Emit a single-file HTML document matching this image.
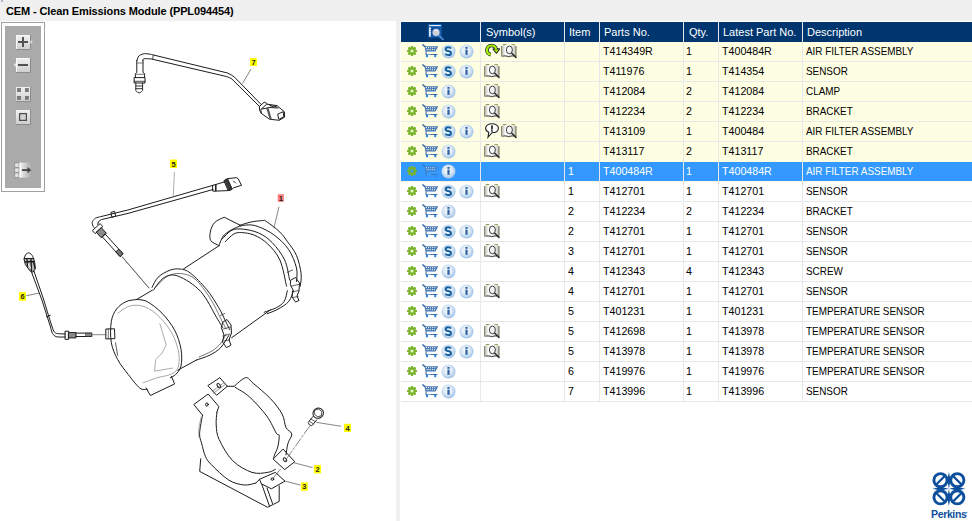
<!DOCTYPE html><html><head><meta charset="utf-8"><style>*{margin:0;padding:0;box-sizing:border-box}
html,body{width:972px;height:521px;overflow:hidden;background:#f0f0f0;font-family:"Liberation Sans",sans-serif;position:relative}
.title{position:absolute;left:6px;top:4px;font-size:11px;font-weight:bold;color:#000;letter-spacing:-0.12px;white-space:nowrap;line-height:14px}
.lp{position:absolute;left:0;top:21px;width:396px;height:500px;background:#fff;overflow:hidden}
.lp svg{position:absolute;left:0;top:-21px}
.tb{position:absolute;left:1px;top:22px;width:44px;height:170px;border:1px solid #a0a0a0;background:#fff}
.tbi{position:absolute;left:3px;top:3px;width:36px;height:162px;background:#aaaaaa}
.tbs{position:absolute;left:0;top:0}
.rp{position:absolute;left:400px;top:21px;width:572px;height:500px;background:#fff}
.hdr{position:absolute;left:401px;top:22px;width:571px;height:20px;background:#003670}
.hsep{position:absolute;top:22px;width:1px;height:20px;background:#e4e8f0}
.hicon{position:absolute;left:424px;top:22px}
.ht{position:absolute;top:22px;height:20px;line-height:20px;font-size:11px;color:#fff;white-space:nowrap}
.row{position:absolute;left:401px;width:571px;height:20px;border-bottom:1px solid #e8e8e8}
.rc{background:#fefee2}
.rw{background:#fff}
.rs{background:#3399ff;border-bottom-color:#3399ff}
.ricons{position:absolute;left:401px}
.rsym{position:absolute;left:481px}
.bt{position:absolute;height:19px;line-height:19px;font-size:11px;color:#000;white-space:nowrap}
.bt span{display:inline-block;transform:scaleX(0.9);transform-origin:0 50%}
.bt.sel{color:#fff}
.logo{position:absolute;left:929px;top:470px}
.bsep{position:absolute;top:42px;width:1px;height:360px;background:#e8e8e8;z-index:2}
.bt.n span{transform:scaleX(0.97)}
</style></head><body>
<svg width="0" height="0" style="position:absolute"><defs><radialGradient id="gc" cx="0.45" cy="0.42" r="0.58"><stop offset="0" stop-color="#f6f9fc"/><stop offset="0.5" stop-color="#e0ebf6"/><stop offset="0.85" stop-color="#b2cfec"/><stop offset="1" stop-color="#98bfe6"/></radialGradient><linearGradient id="btng" x1="0" y1="0" x2="0" y2="1"><stop offset="0" stop-color="#f4f4f4"/><stop offset="1" stop-color="#c8c8c8"/></linearGradient><linearGradient id="pg" x1="0" y1="0" x2="1" y2="0"><stop offset="0" stop-color="#c8c8c0"/><stop offset="0.25" stop-color="#ffffff"/><stop offset="0.8" stop-color="#f0f0f0"/><stop offset="1" stop-color="#c0c0b8"/></linearGradient></defs></svg>
<div style="position:absolute;left:1px;top:0;width:2px;height:2px;background:#b8b8c0"></div>
<div class="title">CEM - Clean Emissions Module (PPL094454)</div>
<div class="lp"><svg width="396" height="521" viewBox="0 0 396 521" style="position:absolute;left:0;top:-21px"><g fill="none" stroke="#1c1c1c" stroke-width="1" stroke-linejoin="round" stroke-linecap="round"><path d="M137.0 60.5 C137.2 59.9 137.6 58.0 138.2 57.0 C138.8 56.0 139.4 55.3 140.5 54.8 C141.6 54.2 143.2 53.8 144.6 53.7 C146.0 53.6 147.5 53.8 149.0 54.0 C150.5 54.2 152.8 54.8 153.5 55.0 L227.6 73 Q231.5 74.8 234.7 77.3 L260.8 104.2" />
<path d="M142.8 60.5 C142.8 60.3 142.6 59.7 143.0 59.4 C143.4 59.1 143.7 58.8 145.0 58.7 C146.3 58.6 150.0 58.9 151.0 58.9 L226.8 76.6 Q229.5 77.6 231.9 79 L259 106" />
<path d="M153.3 55 L152.7 59" stroke-width="0.8"/>
<path d="M136.8 60.5 L136.8 72.5 L135.4 73.6 L135.4 77.6 M143 60.5 L143 72.5 L144.6 73.6 L144.6 77.6" />
<path d="M136.8 63 L143 63 M135.4 74.3 L144.6 74.3" stroke="#555" stroke-width="0.8"/>
<path d="M134.5 77.6 L145.0 77.6 L145.0 83.0 L134.5 83.0 Z" />
<path d="M134.5 81.3 L145 81.3" stroke-width="0.8"/>
<path d="M135.8 83 L135.8 90.5 Q139.2 95.2 142.6 90.5 L142.6 83 M135.8 86 L142.6 86 M135.8 88.7 L142.6 88.7" stroke-width="0.9"/>
<path d="M259.3 106.5 L264.2 102.2 L266.5 103.1 L267.1 104.2" />
<path d="M259.3 106.5 L259.6 110.3 L261.3 113.4" />
<path d="M267.1 104.2 L277.5 105.7 L278.0 106.5 L284.4 111.7 L284.6 117.2 L279.2 120.3 L269.4 119.2 L268.2 118.3 L261.3 113.4 L260.8 110.0 Z" />
<path d="M278.0 114.0 L283.2 111.7 L283.8 116.6 L279.2 119.2 Z" />
<path d="M262.0 109.0 L270.0 107.5 L278.0 108.0" />
<path d="M267.5 108.5 L270.5 118.5" stroke="#555" stroke-width="2.2"/>
<path d="M270 105.5 L273 106.4 M274 106 L276.5 107" stroke-width="1.2"/>
<path d="M250.9 69.4 L242.7 83.1" stroke="#505050" stroke-width="0.7"/>
<path d="M212.9 185.3 L127.8 210 L100.5 216.7  C99.7 216.9 96.8 217.4 95.5 218.2 C94.2 219.0 93.0 220.4 92.5 221.5 C92.0 222.6 92.3 224.0 92.6 225.0 C92.8 226.0 93.8 227.1 94.0 227.5" />
<path d="M213 189.5 L128 213.4 L101.4 219.6 Q97.6 221 97.6 224.4" />
<path d="M111.3 212.3 L114.6 211.4 L115.6 216.2 L112.3 217.1 Z" />
<path d="M92.6 230.9 L95.1 233.6 L102.8 226.7 L100.4 223.9 Z" />
<path d="M96.4 232.4 L101.3 237.8 L106.4 233.3 L101.5 227.9 Z" fill="#8a8a8a"/>
<path d="M102.4 236.9 L120.1 256.6 L123.1 253.9 L105.3 234.2 Z" />
<path d="M116.1 252.1 L120.1 256.6 L123.1 253.9 L119.1 249.5 Z" fill="#777"/>
<path d="M122.5 257 L149 288" stroke="#555" stroke-width="0.7"/>
<path d="M212.9 185.3 L216.0 184.4 L216.0 191.1 L213.1 191.1 Z" />
<path d="M216.0 184.4 L224.2 182.0 L227.5 178.6 L236.7 177.7 L238.1 178.6 L241.5 185.3 L233.8 187.7 L230.9 190.1 L228.0 190.6 L216.0 191.1 Z" />
<path d="M224.2 180.5 L227.5 178.6 L231.9 188.5 L228.5 190.4 Z" fill="#3a3a3a"/>
<path d="M233.5 181 L235.5 183" stroke-width="1"/>
<path d="M174.4 172.4 L173.2 197.2" stroke="#888" stroke-width="0.7"/>
<path d="M24.3 258.6 C24.5 258.0 24.8 255.8 25.5 254.8 C26.2 253.9 27.4 253.0 28.4 252.9 C29.4 252.8 30.6 253.6 31.5 254.5 C32.4 255.4 33.2 257.8 33.6 258.4 Z" />
<path d="M24.3 258.6 L33.6 258.4 L34.7 262.4 L35.3 268.7 L33.0 272.2 L30.1 271.0 L25.5 264.7 Z" fill="#b8b8b8"/>
<path d="M25.5 262 L33.8 261.5 M27 259.5 L27.5 266 M31 259.5 L31.5 270.5 M33.8 263 L35 268" stroke-width="1.3"/>
<path d="M28.5 264 L30.5 268" stroke="#fff" stroke-width="1"/>
<path d="M31.5 272 L41.9 300 L47.7 318.2 L50.5 327  C50.8 328.1 51.6 331.9 52.5 333.5 C53.4 335.1 54.8 336.0 56.0 336.6 C57.2 337.2 58.4 336.9 60.0 337.0 C61.6 337.1 64.5 337.0 65.4 337.0" />
<path d="M34 271.2 L43.8 300 L49.6 319.2 L52.5 328  C52.8 328.7 53.6 331.3 54.5 332.2 C55.4 333.1 56.0 333.3 57.8 333.6 C59.6 333.9 64.1 333.9 65.4 334.0" />
<path d="M46.5 316.8 L50.2 315.3" />
<path d="M65.4 331.2 L68.8 331.2 L68.8 339.3 L65.4 339.3 Z" />
<path d="M68.8 332.6 L76.0 332.6 L76.0 337.9 L68.8 337.9 Z" fill="#8a8a8a"/>
<path d="M76.0 333.1 L91.8 333.1 L91.8 336.5 L76.0 336.5" />
<path d="M86.0 333.1 L91.8 333.1 L91.8 336.5 L86.0 336.5 Z" fill="#888" stroke-width="0.6"/>
<path d="M93.3 334.7 L106 334.7" stroke="#555" stroke-width="0.7"/>
<path d="M106.2 329.0 L114.5 328.8 L114.9 338.6 L106.2 338.9 Z" />
<path d="M108.3 329 L108.3 338.8" stroke-width="0.6"/>
<path d="M26.5 295.7 L38.6 293.2" stroke="#505050" stroke-width="0.7"/>
<path d="M136.6 299.5 C134.8 299.9 129.4 300.0 126.1 301.6 C122.8 303.2 119.1 305.7 116.6 309.0 C114.1 312.3 112.2 316.0 111.3 321.6 C110.4 327.2 110.2 336.4 111.3 342.7 C112.4 349.0 114.9 354.3 117.7 359.6 C120.5 364.9 124.5 369.6 128.2 374.4 C131.9 379.1 136.6 385.6 139.8 388.1 C143.0 390.6 146.0 389.0 147.2 389.2" stroke-width="1"/>
<path d="M136.6 299.5 C138.4 299.9 143.0 299.3 147.2 301.6 C151.4 303.9 157.4 308.4 162.0 313.2 C166.6 317.9 171.4 324.1 174.6 330.1 C177.8 336.1 179.9 343.1 181.0 349.1 C182.1 355.1 181.9 361.8 181.0 366.0 C180.1 370.2 177.5 372.5 175.7 374.4 C173.9 376.3 171.3 377.1 170.4 377.6" stroke-width="1"/>
<path d="M117.7 313.2 C119.8 312.0 125.7 306.9 130.3 305.8 C134.9 304.8 140.2 305.0 145.1 306.9 C150.0 308.8 155.3 312.8 159.9 317.4 C164.5 322.0 169.3 328.3 172.5 334.3 C175.7 340.3 177.9 347.7 178.8 353.3 C179.7 358.9 179.2 364.6 177.8 368.1 C176.4 371.6 173.8 372.8 170.4 374.4 C167.1 376.0 162.3 376.2 157.7 377.6 C153.1 379.0 145.4 381.9 143.0 382.8" stroke="#808080" stroke-width="0.7"/>
<path d="M115.5 342.7 L117.7 355.4" stroke-width="0.7"/>
<path d="M159.9 323.8 L166.2 344.9 L162.0 353.3 L155.6 359.6 L154.6 371.2 L172.5 368.1" stroke="#888" stroke-width="0.7"/>
<path d="M146.1 388.1 L150.4 395.5 L174.6 383.9 L171.5 376.5" />
<path d="M136.6 299.5 L152.1 290.3" />
<path d="M183.3 269.1 L219.4 245.5" />
<path d="M177.8 370.2 L196.5 360" />
<path d="M231.7 337.7 L270.4 309.9" />
<path d="M152.1 287.3 C153.1 285.6 155.1 280.1 158.1 277.2 C161.1 274.3 166.5 271.5 170.2 270.1 C173.9 268.8 176.9 268.6 180.3 269.1 C183.7 269.6 186.0 269.7 190.4 273.1 C194.8 276.5 201.8 283.6 206.5 289.3 C211.2 295.0 215.2 301.7 218.6 307.4 C222.0 313.1 224.8 319.8 226.7 323.5 C228.5 327.2 229.2 328.6 229.7 329.6" />
<path d="M153.1 290.5 C154.9 288.3 160.0 279.9 164.2 277.5 C168.4 275.1 172.2 273.9 178.3 276.2 C184.4 278.5 194.1 284.4 200.5 291.3 C206.9 298.2 212.9 311.4 216.6 317.5 C220.3 323.6 221.7 325.9 222.7 327.6" />
<path d="M155.5 287.2 C157.4 285.4 162.9 278.8 167.0 276.5 C171.1 274.2 175.3 273.1 180.0 273.5 C184.7 273.9 190.0 274.9 195.0 279.0 C200.0 283.1 205.6 291.2 210.0 298.0 C214.4 304.8 218.8 314.8 221.5 320.0 C224.2 325.2 225.2 327.5 226.0 329.0" stroke-width="0.6"/>
<path d="M220.6 315.5 L224.7 313.5" stroke-width="0.7"/>
<path d="M223.0 322.0 L227.0 319.5 L231.0 325.0 L231.5 333.0 L229.0 340.0 L231.0 345.0 L226.5 347.7 L222.5 342.0 L224.0 335.0 L221.5 328.0 Z" />
<path d="M223.5 329 L230.5 327 M223 336 L230 334 M224 341 L229.5 340" stroke-width="0.7"/>
<path d="M196.5 360.0 C198.8 359.2 206.0 357.1 210.0 355.0 C214.0 352.9 217.5 350.9 220.6 347.7 C223.7 344.5 227.3 337.6 228.7 335.6" />
<path d="M199.0 357.0 C201.2 356.0 208.3 353.3 212.0 351.0 C215.7 348.7 218.7 345.8 221.0 343.0 C223.3 340.2 225.2 335.5 226.0 334.0" stroke-width="0.6"/>
<path d="M218.9 245.5 C217.6 244.7 212.2 242.9 210.8 240.7 C209.4 238.5 209.7 235.1 210.3 232.1 C210.9 229.1 212.3 225.0 214.6 222.5 C216.9 220.0 222.6 218.1 224.2 217.2 L240.5 225.4" />
<path d="M239.5 225.4 C241.4 224.8 247.2 222.8 251.1 222.0 C254.9 221.2 260.1 220.7 262.6 220.6 C265.2 220.5 263.5 219.6 266.4 221.5 C269.3 223.4 276.4 228.7 279.9 232.1 C283.4 235.5 284.7 237.8 287.5 241.7 C290.3 245.6 294.2 250.1 296.5 255.4 C298.8 260.8 300.5 268.7 301.1 273.8 C301.7 278.9 300.4 284.1 300.3 286.1" />
<path d="M219.4 244.5 C220.2 242.9 221.3 237.9 224.2 235.0 C227.1 232.1 232.7 229.0 236.7 227.3 C240.7 225.6 244.5 225.0 248.2 224.9 C251.9 224.8 254.4 225.1 258.7 226.8 C263.0 228.5 269.1 231.2 274.1 235.0 C279.1 238.8 284.8 243.8 288.5 249.3 C292.2 254.8 295.2 262.6 296.5 268.0 C297.8 273.4 296.5 279.2 296.5 281.5" />
<path d="M222.3 238.8 C223.9 237.4 228.4 231.8 231.9 230.2 C235.4 228.6 238.9 228.7 243.4 229.2 C247.9 229.7 253.9 230.8 258.7 233.0 C263.5 235.2 267.9 238.1 272.2 242.6 C276.5 247.1 281.8 253.8 284.7 260.0 C287.6 266.2 288.8 276.7 289.6 280.0" />
<path d="M225.2 241.7 C226.6 240.4 231.1 235.5 233.8 234.0 C236.5 232.5 238.2 232.4 241.5 232.6 C244.8 232.8 249.6 233.2 253.9 235.0 C258.2 236.8 263.1 239.4 267.4 243.6 C271.7 247.8 276.7 252.9 279.9 260.0 C283.1 267.1 285.4 281.8 286.5 286.1" />
<path d="M287.3 272.3 L292.6 270" stroke-width="0.7"/>
<path d="M291.0 280.0 L295.5 277.5 L299.5 283.0 L299.0 291.0 L297.0 296.0 L299.0 300.5 L295.5 302.0 L292.0 297.0 L293.0 290.0 L290.5 285.0 Z" />
<path d="M291.5 286 L298.5 284.5 M292 292 L298.5 290.5 M293 297.5 L298 296.5" stroke-width="0.7"/>
<path d="M287.3 290.7 C286.8 292.5 286.0 298.6 284.2 301.4 C282.4 304.2 279.8 305.8 276.5 307.6 C273.2 309.4 266.2 311.4 264.2 312.2" />
<path d="M293.4 290.7 C292.6 292.5 291.4 298.3 288.8 301.4 C286.2 304.5 281.6 307.1 278.0 309.1 C274.4 311.2 269.1 312.9 267.3 313.7" />
<path d="M278.9 207 L274.1 227.3" stroke="#555" stroke-width="0.7"/>
<path d="M122 256.8 L149 288" stroke="#555" stroke-width="0.7"/>
<path d="M208.2 385.4 L219.8 377.7 L227.4 386.3 L216.9 395.0 Z" />
<ellipse cx="218.8" cy="385.6" rx="1.4" ry="2.4" transform="rotate(-35 218.8 385.6)"/>
<path d="M213.5 393.2 L225 384.6 M212 391.5 L223.6 383" stroke="#555" stroke-width="0.6"/>
<path d="M227 386.3 L234.1 386.3  C236.0 384.9 242.5 378.2 245.7 377.7 C248.9 377.2 249.2 379.9 253.3 383.4 C257.5 386.9 265.8 393.7 270.6 398.8 C275.4 403.9 279.5 409.3 282.1 414.1 C284.7 418.9 284.4 424.3 286.0 427.6 C287.6 430.9 291.5 431.4 291.8 434.0 C292.1 436.6 289.0 439.8 288.0 443.3 C287.0 446.8 286.3 453.0 286.0 454.9" />
<path d="M235.1 387.3 C237.5 388.9 244.2 392.1 249.5 396.9 C254.8 401.7 262.3 410.0 266.8 416.1 C271.3 422.2 274.3 430.1 276.4 433.3 C278.5 436.5 279.0 433.2 279.2 435.5 C279.4 437.8 278.6 443.6 277.8 446.8 C277.0 450.1 275.2 453.0 274.5 455.0 C273.8 457.0 273.6 458.2 273.4 458.8" />
<path d="M273.4 458.8 L283.1 449.1 L294.7 461.7 L285.0 469.4 Z" />
<ellipse cx="285" cy="459.8" rx="1.4" ry="2.2" transform="rotate(-40 285 459.8)"/>
<path d="M216.9 412.2 L218.8 406.5 L208.2 394.0 L193.8 404.5 L202.5 415.1" />
<path d="M202.5 415.1 C202.0 418.1 199.8 428.6 199.6 433.3 C199.4 438.0 200.6 439.5 201.6 443.3 C202.6 447.1 203.8 452.8 205.4 456.4 C207.0 459.9 207.4 460.7 211.3 464.6 C215.2 468.6 223.3 476.7 228.8 480.1 C234.3 483.5 239.8 484.5 244.3 485.0 C248.8 485.5 254.0 483.3 255.9 483.0" />
<path d="M255.9 483 L259.8 479.1" />
<path d="M201.2 417.0 C200.8 418.8 199.4 424.7 199.0 428.0 C198.6 431.3 198.8 435.5 198.8 437.0" stroke="#666" stroke-width="0.6"/>
<ellipse cx="206.9" cy="404.5" rx="1.3" ry="1.6"/>
<path d="M216.9 412.2 C216.8 414.3 215.8 420.5 216.2 425.0 C216.6 429.5 216.3 433.4 219.1 439.4 C221.8 445.3 227.2 455.2 232.7 460.7 C238.2 466.2 246.2 470.4 252.0 472.4 C257.8 474.3 263.7 472.9 267.6 472.4 C271.5 471.9 274.0 469.9 275.3 469.4" />
<path d="M200.7 458.8 L199.7 471.4 L267.6 507.3 L279.2 501.4 L279.2 485.9" />
<path d="M259.8 479.1 L275.3 472.4 L285.0 481.1 L271.4 488.8 L261.7 484.0 Z" />
<ellipse cx="272.4" cy="479.1" rx="1.4" ry="1.2"/>
<path d="M261.7 484 L269.5 506.3 M267 488 L272.5 503.5" />
<ellipse cx="318.2" cy="413.2" rx="5.4" ry="5" transform="rotate(-30 318.2 413.2)"/>
<path d="M314.8 410.2 L318.6 409.0 L321.8 411.4 L321.6 415.6 L317.8 416.8 L314.6 414.4 Z" stroke-width="0.8"/>
<path d="M313 416.5 L308.2 422.3 Q308.5 425.6 311.8 425.8 L316.8 419.8" stroke-width="0.9"/>
<path d="M310.8 419 L315.4 421.6 M309.4 421.4 L313.8 424" stroke-width="0.7"/>
<path d="M309.4 426.5 L285 461" stroke="#555" stroke-width="0.7" stroke-dasharray="9 2 2 2"/>
<path d="M280.2 469.4 L272.4 479.1" stroke="#555" stroke-width="0.7"/>
<path d="M316.6 422.4 L340.6 426.2" stroke="#505050" stroke-width="0.7"/>
<path d="M293.7 462.7 L312.2 467.5" stroke="#505050" stroke-width="0.7"/>
<path d="M285 481.1 L300.1 485" stroke="#505050" stroke-width="0.7"/></g><g font-family="Liberation Sans" font-size="7.5" font-weight="bold" text-anchor="middle" fill="#222"><rect x="250" y="58" width="7" height="8" fill="#ffff00"/><text x="253.5" y="64.6">7</text><rect x="170" y="159.5" width="7" height="8.5" fill="#ffff00"/><text x="173.5" y="166.6">5</text><rect x="277.7" y="194.2" width="6.2" height="7.7" fill="#ff8080"/><text x="280.8" y="200.5">1</text><rect x="19" y="292.2" width="7" height="8.6" fill="#ffff00"/><text x="22.5" y="299.4">6</text><rect x="344" y="423.8" width="7" height="8.2" fill="#ffff00"/><text x="347.5" y="430.6">4</text><rect x="314" y="465" width="7" height="8.4" fill="#ffff00"/><text x="317.5" y="472.0">2</text><rect x="300.9" y="482.4" width="6.9" height="8.4" fill="#ffff00"/><text x="304.3" y="489.4">3</text></g></svg></div>
<div class="tb"><div class="tbi"></div></div>
<svg width="50" height="200" viewBox="0 0 50 200" style="position:absolute;left:0;top:0">
<defs>
<linearGradient id="tbg" x1="0" y1="0" x2="0" y2="1"><stop offset="0" stop-color="#f2f2f2"/><stop offset="1" stop-color="#cfcfcf"/></linearGradient>
</defs>
<!-- plus -->
<rect x="16" y="35" width="14" height="14" fill="url(#tbg)"/>
<path d="M16.5 49 V35.5 H29.5" fill="none" stroke="#fafafa" stroke-width="1"/>
<path d="M16 49.5 H30.5 V35" fill="none" stroke="#8c8c8c" stroke-width="1"/>
<path d="M30.5 40 L32.8 42 L30.5 44 Z" fill="#e4e4e4"/>
<rect x="18" y="41" width="10" height="2" fill="#525252"/><rect x="22" y="37" width="2" height="10" fill="#525252"/>
<!-- minus -->
<rect x="16" y="58" width="14" height="14" fill="url(#tbg)"/>
<path d="M16.5 72 V58.5 H29.5" fill="none" stroke="#fafafa" stroke-width="1"/>
<path d="M16 72.5 H30.5 V58" fill="none" stroke="#8c8c8c" stroke-width="1"/>
<path d="M16 63 L13.5 65 L16 67 Z" fill="#e4e4e4"/>
<rect x="18" y="64" width="10" height="2" fill="#525252"/>
<!-- grid -->
<rect x="16" y="87" width="14" height="14" fill="url(#tbg)"/>
<path d="M16 101.5 H30.5 V87" fill="none" stroke="#8c8c8c" stroke-width="1"/>
<g fill="#7a7a7a" stroke="#666" stroke-width="0.6"><rect x="17.5" y="88.5" width="3.2" height="3.2"/><rect x="25.3" y="88.5" width="3.2" height="3.2"/><rect x="17.5" y="96.3" width="3.2" height="3.2"/><rect x="25.3" y="96.3" width="3.2" height="3.2"/></g>
<!-- square -->
<rect x="16" y="110" width="14" height="14" fill="url(#tbg)"/>
<path d="M16 124.5 H30.5 V110" fill="none" stroke="#8c8c8c" stroke-width="1"/>
<rect x="19.6" y="113.6" width="6.8" height="6.8" fill="#d4d4d4" stroke="#505050" stroke-width="1.3"/>
<!-- fit -->
<g fill="#e6e6e6" stroke="#8a8a8a" stroke-width="0.7"><rect x="14.8" y="163" width="4.2" height="4.3"/><rect x="14.8" y="168" width="4.2" height="4.3"/><rect x="14.8" y="173" width="4.2" height="4.3"/></g>
<defs><linearGradient id="fitg" x1="0" y1="0" x2="1" y2="0"><stop offset="0" stop-color="#f4f4f4"/><stop offset="1" stop-color="#aaaaaa"/></linearGradient></defs>
<rect x="19.6" y="162.6" width="11.6" height="15" fill="url(#fitg)"/>
<rect x="19.6" y="162.6" width="1.2" height="15" fill="#fff"/>
<rect x="22" y="169.2" width="6" height="1.8" fill="#454545"/>
<path d="M27.5 167 L31.2 170.1 L27.5 173.2 Z" fill="#454545"/>
</svg>

<div class="rp"></div>
<div class="hdr"></div>
<div class="hsep" style="left:480px"></div>
<div class="hsep" style="left:564px"></div>
<div class="hsep" style="left:599px"></div>
<div class="hsep" style="left:683px"></div>
<div class="hsep" style="left:718px"></div>
<div class="hsep" style="left:802px"></div>
<div class="bsep" style="left:480px"></div>
<div class="bsep" style="left:564px"></div>
<div class="bsep" style="left:599px"></div>
<div class="bsep" style="left:683px"></div>
<div class="bsep" style="left:718px"></div>
<div class="bsep" style="left:802px"></div>
<svg class="hicon" width="20" height="20" viewBox="0 0 20 20"><g transform="translate(0 0)"><rect x="4.3" y="2.2" width="13.2" height="13.2" fill="#1a6ec4"/>
 <rect x="5.1" y="4.6" width="11.6" height="10" fill="#0e4f98"/>
 <rect x="5" y="3" width="11.8" height="1.1" fill="#e4eefa"/>
 <rect x="5.1" y="5.4" width="1.9" height="9.2" fill="#eef4fb"/>
 <g fill="#2a6ab8"><rect x="6.3" y="7" width="0.8" height="0.8"/><rect x="6.3" y="9" width="0.8" height="0.8"/><rect x="6.3" y="11" width="0.8" height="0.8"/><rect x="6.3" y="13" width="0.8" height="0.8"/></g>
 <path d="M14.6 13.4 L19 17.4" stroke="#4f8ad0" stroke-width="1.9" stroke-linecap="round"/>
 <circle cx="12.1" cy="10.4" r="4.5" fill="#2c66b2"/>
 <circle cx="12.1" cy="10.4" r="3.5" fill="#cdd3db"/>
 <path d="M10 8.6 Q12 7.2 14.2 8.4" stroke="#f4f6f8" stroke-width="0.9" fill="none"/></g></svg>
<div class="ht" style="left:486px">Symbol(s)</div>
<div class="ht" style="left:569px">Item</div>
<div class="ht" style="left:604px">Parts No.</div>
<div class="ht" style="left:689px">Qty.</div>
<div class="ht" style="left:723px">Latest Part No.</div>
<div class="ht" style="left:807px">Description</div>
<div class="row rc" style="top:42px"></div>
<svg class="ricons" style="top:42px" width="79" height="19" viewBox="0 0 79 19"><g transform="translate(6 4)"><g fill="#79b32b">
 <circle cx="5" cy="5" r="3.7"/>
 <rect x="3.9" y="0" width="2.2" height="10" rx="0.6"/>
 <rect x="0" y="3.9" width="10" height="2.2" rx="0.6"/>
 <rect x="3.9" y="0" width="2.2" height="10" rx="0.6" transform="rotate(45 5 5)"/>
 <rect x="3.9" y="0" width="2.2" height="10" rx="0.6" transform="rotate(-45 5 5)"/>
 </g>
 <circle cx="5" cy="5" r="1.6" fill="#e4f6c8"/></g><g transform="translate(21 2)"><path d="M0.9 0.9 L3 2.6" stroke="#3d6ba5" stroke-width="1.5" stroke-linecap="round"/>
 <path d="M2.6 2.2 H16.2 L13.6 7.4 H3.4 Z" fill="#4776b0"/>
 <g fill="#e6eef8"><rect x="3.7" y="3.1" width="1.3" height="1.1"/><rect x="5.9" y="3.1" width="1.1" height="1.1"/><rect x="8" y="3.1" width="1.1" height="1.1"/><rect x="10" y="3.1" width="1.1" height="1.1"/><rect x="12.2" y="3.1" width="1.1" height="1.1"/>
 <rect x="4.5" y="5.1" width="1.1" height="1.1"/><rect x="6.2" y="5.1" width="1.1" height="1.1"/><rect x="8.1" y="5.1" width="1.1" height="1.1"/><rect x="10" y="5.1" width="1.1" height="1.1"/><rect x="12" y="5.1" width="1.1" height="1.1"/></g>
 <path d="M4.1 7.2 V10.5 H15.4" fill="none" stroke="#3d6ba5" stroke-width="1.1"/>
 <path d="M5 10.5 H9" stroke="#7ab8f0" stroke-width="0.8"/>
 <rect x="4" y="11" width="2" height="2.2" fill="#2e88e0"/><rect x="12.2" y="11" width="2" height="2.2" fill="#2e88e0"/></g><g transform="translate(40 2)"><circle cx="7.5" cy="7.5" r="7" fill="url(#gc)"/>
 <path d="M10 4.6 Q9.2 3.3 7.2 3.3 Q4.6 3.3 4.6 5.3 Q4.6 6.7 7.2 7.1 Q10 7.5 10 9.2 Q10 11.1 7.2 11.1 Q5.2 11.1 4.3 9.8" fill="none" stroke="#135fa0" stroke-width="2"/></g><g transform="translate(58 2)"><circle cx="7.5" cy="7.5" r="7" fill="url(#gc)"/>
 <rect x="6.4" y="3" width="2.2" height="1.8" fill="#2f60a0"/>
 <rect x="6.4" y="5.6" width="2.2" height="5.2" fill="#2f60a0"/></g></svg>
<svg class="rsym" style="top:42px" width="83" height="19" viewBox="0 0 83 19"><g transform="translate(4 1)"><path d="M5.7 11.6 A4.6 4.6 0 1 1 11.1 6.3" fill="none" stroke="#2a2a2a" stroke-width="3.7"/>
 <path d="M8.3 6.1 L14.4 6.1 L11.4 10 Z" fill="#2a2a2a" stroke="#2a2a2a" stroke-width="1.5" stroke-linejoin="round"/>
 <path d="M5.7 11.6 A4.6 4.6 0 1 1 11.1 6.3" fill="none" stroke="#a2ee00" stroke-width="2.2"/>
 <path d="M8.9 6.5 L13.8 6.5 L11.4 9.4 Z" fill="#a2ee00"/></g><g transform="translate(20 0)"><linearGradient id="pg" x1="0" y1="0" x2="1" y2="0"><stop offset="0" stop-color="#c8c8c0"/><stop offset="0.25" stop-color="#ffffff"/><stop offset="0.8" stop-color="#f0f0f0"/><stop offset="1" stop-color="#c0c0b8"/></linearGradient>
 <rect x="0.2" y="4" width="1.3" height="10.6" fill="#6e6e58"/>
 <rect x="14.2" y="4" width="1.3" height="10.6" fill="#6e6e58"/>
 <rect x="1.8" y="2" width="3.6" height="1.4" fill="#9c9a62"/><rect x="10.4" y="2" width="3.6" height="1.4" fill="#a8a660"/>
 <path d="M1.4 3.8 L5.2 3.2 L7.8 4 L10.4 3.2 L14.2 3.8 L14.2 14 L7.8 14.4 L1.4 14 Z" fill="url(#pg)"/>
 <path d="M1.4 14.2 Q4.5 13.4 7.8 14.7 Q11 13.4 14.2 14.2" fill="none" stroke="#5a5a5a" stroke-width="1.1"/>
 <ellipse cx="8.4" cy="7.9" rx="3" ry="3.9" fill="none" stroke="#3a3a3a" stroke-width="1"/>
 <path d="M10.8 11.2 L15 15.4" stroke="#2a2a2a" stroke-width="1.5" stroke-linecap="round"/></g></svg>
<div class="bt n" style="left:603px;top:42px"><span>T414349R</span></div>
<div class="bt n" style="left:686px;top:42px"><span>1</span></div>
<div class="bt n" style="left:722px;top:42px"><span>T400484R</span></div>
<div class="bt" style="left:806px;top:42px"><span>AIR FILTER ASSEMBLY</span></div>
<div class="row rc" style="top:62px"></div>
<svg class="ricons" style="top:62px" width="79" height="19" viewBox="0 0 79 19"><g transform="translate(6 4)"><g fill="#79b32b">
 <circle cx="5" cy="5" r="3.7"/>
 <rect x="3.9" y="0" width="2.2" height="10" rx="0.6"/>
 <rect x="0" y="3.9" width="10" height="2.2" rx="0.6"/>
 <rect x="3.9" y="0" width="2.2" height="10" rx="0.6" transform="rotate(45 5 5)"/>
 <rect x="3.9" y="0" width="2.2" height="10" rx="0.6" transform="rotate(-45 5 5)"/>
 </g>
 <circle cx="5" cy="5" r="1.6" fill="#e4f6c8"/></g><g transform="translate(21 2)"><path d="M0.9 0.9 L3 2.6" stroke="#3d6ba5" stroke-width="1.5" stroke-linecap="round"/>
 <path d="M2.6 2.2 H16.2 L13.6 7.4 H3.4 Z" fill="#4776b0"/>
 <g fill="#e6eef8"><rect x="3.7" y="3.1" width="1.3" height="1.1"/><rect x="5.9" y="3.1" width="1.1" height="1.1"/><rect x="8" y="3.1" width="1.1" height="1.1"/><rect x="10" y="3.1" width="1.1" height="1.1"/><rect x="12.2" y="3.1" width="1.1" height="1.1"/>
 <rect x="4.5" y="5.1" width="1.1" height="1.1"/><rect x="6.2" y="5.1" width="1.1" height="1.1"/><rect x="8.1" y="5.1" width="1.1" height="1.1"/><rect x="10" y="5.1" width="1.1" height="1.1"/><rect x="12" y="5.1" width="1.1" height="1.1"/></g>
 <path d="M4.1 7.2 V10.5 H15.4" fill="none" stroke="#3d6ba5" stroke-width="1.1"/>
 <path d="M5 10.5 H9" stroke="#7ab8f0" stroke-width="0.8"/>
 <rect x="4" y="11" width="2" height="2.2" fill="#2e88e0"/><rect x="12.2" y="11" width="2" height="2.2" fill="#2e88e0"/></g><g transform="translate(40 2)"><circle cx="7.5" cy="7.5" r="7" fill="url(#gc)"/>
 <path d="M10 4.6 Q9.2 3.3 7.2 3.3 Q4.6 3.3 4.6 5.3 Q4.6 6.7 7.2 7.1 Q10 7.5 10 9.2 Q10 11.1 7.2 11.1 Q5.2 11.1 4.3 9.8" fill="none" stroke="#135fa0" stroke-width="2"/></g><g transform="translate(58 2)"><circle cx="7.5" cy="7.5" r="7" fill="url(#gc)"/>
 <rect x="6.4" y="3" width="2.2" height="1.8" fill="#2f60a0"/>
 <rect x="6.4" y="5.6" width="2.2" height="5.2" fill="#2f60a0"/></g></svg>
<svg class="rsym" style="top:62px" width="83" height="19" viewBox="0 0 83 19"><g transform="translate(3 0)"><linearGradient id="pg" x1="0" y1="0" x2="1" y2="0"><stop offset="0" stop-color="#c8c8c0"/><stop offset="0.25" stop-color="#ffffff"/><stop offset="0.8" stop-color="#f0f0f0"/><stop offset="1" stop-color="#c0c0b8"/></linearGradient>
 <rect x="0.2" y="4" width="1.3" height="10.6" fill="#6e6e58"/>
 <rect x="14.2" y="4" width="1.3" height="10.6" fill="#6e6e58"/>
 <rect x="1.8" y="2" width="3.6" height="1.4" fill="#9c9a62"/><rect x="10.4" y="2" width="3.6" height="1.4" fill="#a8a660"/>
 <path d="M1.4 3.8 L5.2 3.2 L7.8 4 L10.4 3.2 L14.2 3.8 L14.2 14 L7.8 14.4 L1.4 14 Z" fill="url(#pg)"/>
 <path d="M1.4 14.2 Q4.5 13.4 7.8 14.7 Q11 13.4 14.2 14.2" fill="none" stroke="#5a5a5a" stroke-width="1.1"/>
 <ellipse cx="8.4" cy="7.9" rx="3" ry="3.9" fill="none" stroke="#3a3a3a" stroke-width="1"/>
 <path d="M10.8 11.2 L15 15.4" stroke="#2a2a2a" stroke-width="1.5" stroke-linecap="round"/></g></svg>
<div class="bt n" style="left:603px;top:62px"><span>T411976</span></div>
<div class="bt n" style="left:686px;top:62px"><span>1</span></div>
<div class="bt n" style="left:722px;top:62px"><span>T414354</span></div>
<div class="bt" style="left:806px;top:62px"><span>SENSOR</span></div>
<div class="row rc" style="top:82px"></div>
<svg class="ricons" style="top:82px" width="79" height="19" viewBox="0 0 79 19"><g transform="translate(6 4)"><g fill="#79b32b">
 <circle cx="5" cy="5" r="3.7"/>
 <rect x="3.9" y="0" width="2.2" height="10" rx="0.6"/>
 <rect x="0" y="3.9" width="10" height="2.2" rx="0.6"/>
 <rect x="3.9" y="0" width="2.2" height="10" rx="0.6" transform="rotate(45 5 5)"/>
 <rect x="3.9" y="0" width="2.2" height="10" rx="0.6" transform="rotate(-45 5 5)"/>
 </g>
 <circle cx="5" cy="5" r="1.6" fill="#e4f6c8"/></g><g transform="translate(21 2)"><path d="M0.9 0.9 L3 2.6" stroke="#3d6ba5" stroke-width="1.5" stroke-linecap="round"/>
 <path d="M2.6 2.2 H16.2 L13.6 7.4 H3.4 Z" fill="#4776b0"/>
 <g fill="#e6eef8"><rect x="3.7" y="3.1" width="1.3" height="1.1"/><rect x="5.9" y="3.1" width="1.1" height="1.1"/><rect x="8" y="3.1" width="1.1" height="1.1"/><rect x="10" y="3.1" width="1.1" height="1.1"/><rect x="12.2" y="3.1" width="1.1" height="1.1"/>
 <rect x="4.5" y="5.1" width="1.1" height="1.1"/><rect x="6.2" y="5.1" width="1.1" height="1.1"/><rect x="8.1" y="5.1" width="1.1" height="1.1"/><rect x="10" y="5.1" width="1.1" height="1.1"/><rect x="12" y="5.1" width="1.1" height="1.1"/></g>
 <path d="M4.1 7.2 V10.5 H15.4" fill="none" stroke="#3d6ba5" stroke-width="1.1"/>
 <path d="M5 10.5 H9" stroke="#7ab8f0" stroke-width="0.8"/>
 <rect x="4" y="11" width="2" height="2.2" fill="#2e88e0"/><rect x="12.2" y="11" width="2" height="2.2" fill="#2e88e0"/></g><g transform="translate(40 2)"><circle cx="7.5" cy="7.5" r="7" fill="url(#gc)"/>
 <rect x="6.4" y="3" width="2.2" height="1.8" fill="#2f60a0"/>
 <rect x="6.4" y="5.6" width="2.2" height="5.2" fill="#2f60a0"/></g></svg>
<svg class="rsym" style="top:82px" width="83" height="19" viewBox="0 0 83 19"><g transform="translate(3 0)"><linearGradient id="pg" x1="0" y1="0" x2="1" y2="0"><stop offset="0" stop-color="#c8c8c0"/><stop offset="0.25" stop-color="#ffffff"/><stop offset="0.8" stop-color="#f0f0f0"/><stop offset="1" stop-color="#c0c0b8"/></linearGradient>
 <rect x="0.2" y="4" width="1.3" height="10.6" fill="#6e6e58"/>
 <rect x="14.2" y="4" width="1.3" height="10.6" fill="#6e6e58"/>
 <rect x="1.8" y="2" width="3.6" height="1.4" fill="#9c9a62"/><rect x="10.4" y="2" width="3.6" height="1.4" fill="#a8a660"/>
 <path d="M1.4 3.8 L5.2 3.2 L7.8 4 L10.4 3.2 L14.2 3.8 L14.2 14 L7.8 14.4 L1.4 14 Z" fill="url(#pg)"/>
 <path d="M1.4 14.2 Q4.5 13.4 7.8 14.7 Q11 13.4 14.2 14.2" fill="none" stroke="#5a5a5a" stroke-width="1.1"/>
 <ellipse cx="8.4" cy="7.9" rx="3" ry="3.9" fill="none" stroke="#3a3a3a" stroke-width="1"/>
 <path d="M10.8 11.2 L15 15.4" stroke="#2a2a2a" stroke-width="1.5" stroke-linecap="round"/></g></svg>
<div class="bt n" style="left:603px;top:82px"><span>T412084</span></div>
<div class="bt n" style="left:686px;top:82px"><span>2</span></div>
<div class="bt n" style="left:722px;top:82px"><span>T412084</span></div>
<div class="bt" style="left:806px;top:82px"><span>CLAMP</span></div>
<div class="row rc" style="top:102px"></div>
<svg class="ricons" style="top:102px" width="79" height="19" viewBox="0 0 79 19"><g transform="translate(6 4)"><g fill="#79b32b">
 <circle cx="5" cy="5" r="3.7"/>
 <rect x="3.9" y="0" width="2.2" height="10" rx="0.6"/>
 <rect x="0" y="3.9" width="10" height="2.2" rx="0.6"/>
 <rect x="3.9" y="0" width="2.2" height="10" rx="0.6" transform="rotate(45 5 5)"/>
 <rect x="3.9" y="0" width="2.2" height="10" rx="0.6" transform="rotate(-45 5 5)"/>
 </g>
 <circle cx="5" cy="5" r="1.6" fill="#e4f6c8"/></g><g transform="translate(21 2)"><path d="M0.9 0.9 L3 2.6" stroke="#3d6ba5" stroke-width="1.5" stroke-linecap="round"/>
 <path d="M2.6 2.2 H16.2 L13.6 7.4 H3.4 Z" fill="#4776b0"/>
 <g fill="#e6eef8"><rect x="3.7" y="3.1" width="1.3" height="1.1"/><rect x="5.9" y="3.1" width="1.1" height="1.1"/><rect x="8" y="3.1" width="1.1" height="1.1"/><rect x="10" y="3.1" width="1.1" height="1.1"/><rect x="12.2" y="3.1" width="1.1" height="1.1"/>
 <rect x="4.5" y="5.1" width="1.1" height="1.1"/><rect x="6.2" y="5.1" width="1.1" height="1.1"/><rect x="8.1" y="5.1" width="1.1" height="1.1"/><rect x="10" y="5.1" width="1.1" height="1.1"/><rect x="12" y="5.1" width="1.1" height="1.1"/></g>
 <path d="M4.1 7.2 V10.5 H15.4" fill="none" stroke="#3d6ba5" stroke-width="1.1"/>
 <path d="M5 10.5 H9" stroke="#7ab8f0" stroke-width="0.8"/>
 <rect x="4" y="11" width="2" height="2.2" fill="#2e88e0"/><rect x="12.2" y="11" width="2" height="2.2" fill="#2e88e0"/></g><g transform="translate(40 2)"><circle cx="7.5" cy="7.5" r="7" fill="url(#gc)"/>
 <rect x="6.4" y="3" width="2.2" height="1.8" fill="#2f60a0"/>
 <rect x="6.4" y="5.6" width="2.2" height="5.2" fill="#2f60a0"/></g></svg>
<svg class="rsym" style="top:102px" width="83" height="19" viewBox="0 0 83 19"><g transform="translate(3 0)"><linearGradient id="pg" x1="0" y1="0" x2="1" y2="0"><stop offset="0" stop-color="#c8c8c0"/><stop offset="0.25" stop-color="#ffffff"/><stop offset="0.8" stop-color="#f0f0f0"/><stop offset="1" stop-color="#c0c0b8"/></linearGradient>
 <rect x="0.2" y="4" width="1.3" height="10.6" fill="#6e6e58"/>
 <rect x="14.2" y="4" width="1.3" height="10.6" fill="#6e6e58"/>
 <rect x="1.8" y="2" width="3.6" height="1.4" fill="#9c9a62"/><rect x="10.4" y="2" width="3.6" height="1.4" fill="#a8a660"/>
 <path d="M1.4 3.8 L5.2 3.2 L7.8 4 L10.4 3.2 L14.2 3.8 L14.2 14 L7.8 14.4 L1.4 14 Z" fill="url(#pg)"/>
 <path d="M1.4 14.2 Q4.5 13.4 7.8 14.7 Q11 13.4 14.2 14.2" fill="none" stroke="#5a5a5a" stroke-width="1.1"/>
 <ellipse cx="8.4" cy="7.9" rx="3" ry="3.9" fill="none" stroke="#3a3a3a" stroke-width="1"/>
 <path d="M10.8 11.2 L15 15.4" stroke="#2a2a2a" stroke-width="1.5" stroke-linecap="round"/></g></svg>
<div class="bt n" style="left:603px;top:102px"><span>T412234</span></div>
<div class="bt n" style="left:686px;top:102px"><span>2</span></div>
<div class="bt n" style="left:722px;top:102px"><span>T412234</span></div>
<div class="bt" style="left:806px;top:102px"><span>BRACKET</span></div>
<div class="row rc" style="top:122px"></div>
<svg class="ricons" style="top:122px" width="79" height="19" viewBox="0 0 79 19"><g transform="translate(6 4)"><g fill="#79b32b">
 <circle cx="5" cy="5" r="3.7"/>
 <rect x="3.9" y="0" width="2.2" height="10" rx="0.6"/>
 <rect x="0" y="3.9" width="10" height="2.2" rx="0.6"/>
 <rect x="3.9" y="0" width="2.2" height="10" rx="0.6" transform="rotate(45 5 5)"/>
 <rect x="3.9" y="0" width="2.2" height="10" rx="0.6" transform="rotate(-45 5 5)"/>
 </g>
 <circle cx="5" cy="5" r="1.6" fill="#e4f6c8"/></g><g transform="translate(21 2)"><path d="M0.9 0.9 L3 2.6" stroke="#3d6ba5" stroke-width="1.5" stroke-linecap="round"/>
 <path d="M2.6 2.2 H16.2 L13.6 7.4 H3.4 Z" fill="#4776b0"/>
 <g fill="#e6eef8"><rect x="3.7" y="3.1" width="1.3" height="1.1"/><rect x="5.9" y="3.1" width="1.1" height="1.1"/><rect x="8" y="3.1" width="1.1" height="1.1"/><rect x="10" y="3.1" width="1.1" height="1.1"/><rect x="12.2" y="3.1" width="1.1" height="1.1"/>
 <rect x="4.5" y="5.1" width="1.1" height="1.1"/><rect x="6.2" y="5.1" width="1.1" height="1.1"/><rect x="8.1" y="5.1" width="1.1" height="1.1"/><rect x="10" y="5.1" width="1.1" height="1.1"/><rect x="12" y="5.1" width="1.1" height="1.1"/></g>
 <path d="M4.1 7.2 V10.5 H15.4" fill="none" stroke="#3d6ba5" stroke-width="1.1"/>
 <path d="M5 10.5 H9" stroke="#7ab8f0" stroke-width="0.8"/>
 <rect x="4" y="11" width="2" height="2.2" fill="#2e88e0"/><rect x="12.2" y="11" width="2" height="2.2" fill="#2e88e0"/></g><g transform="translate(40 2)"><circle cx="7.5" cy="7.5" r="7" fill="url(#gc)"/>
 <path d="M10 4.6 Q9.2 3.3 7.2 3.3 Q4.6 3.3 4.6 5.3 Q4.6 6.7 7.2 7.1 Q10 7.5 10 9.2 Q10 11.1 7.2 11.1 Q5.2 11.1 4.3 9.8" fill="none" stroke="#135fa0" stroke-width="2"/></g><g transform="translate(58 2)"><circle cx="7.5" cy="7.5" r="7" fill="url(#gc)"/>
 <rect x="6.4" y="3" width="2.2" height="1.8" fill="#2f60a0"/>
 <rect x="6.4" y="5.6" width="2.2" height="5.2" fill="#2f60a0"/></g></svg>
<svg class="rsym" style="top:122px" width="83" height="19" viewBox="0 0 83 19"><g transform="translate(4 1)"><path d="M6.9 0.8 C3 0.8 0.6 2.8 0.6 5.2 C0.6 7.2 1.9 8.6 3.8 9.2 L3 14.2 L7 9.7 C11 9.6 13.4 7.6 13.4 5.2 C13.4 2.8 11 0.8 6.9 0.8 Z" fill="#fff" stroke="#222" stroke-width="1.1"/>
 <rect x="6.1" y="2.4" width="1.7" height="4.2" fill="#222"/><rect x="6.1" y="7.2" width="1.7" height="1.5" fill="#222"/></g><g transform="translate(20 0)"><linearGradient id="pg" x1="0" y1="0" x2="1" y2="0"><stop offset="0" stop-color="#c8c8c0"/><stop offset="0.25" stop-color="#ffffff"/><stop offset="0.8" stop-color="#f0f0f0"/><stop offset="1" stop-color="#c0c0b8"/></linearGradient>
 <rect x="0.2" y="4" width="1.3" height="10.6" fill="#6e6e58"/>
 <rect x="14.2" y="4" width="1.3" height="10.6" fill="#6e6e58"/>
 <rect x="1.8" y="2" width="3.6" height="1.4" fill="#9c9a62"/><rect x="10.4" y="2" width="3.6" height="1.4" fill="#a8a660"/>
 <path d="M1.4 3.8 L5.2 3.2 L7.8 4 L10.4 3.2 L14.2 3.8 L14.2 14 L7.8 14.4 L1.4 14 Z" fill="url(#pg)"/>
 <path d="M1.4 14.2 Q4.5 13.4 7.8 14.7 Q11 13.4 14.2 14.2" fill="none" stroke="#5a5a5a" stroke-width="1.1"/>
 <ellipse cx="8.4" cy="7.9" rx="3" ry="3.9" fill="none" stroke="#3a3a3a" stroke-width="1"/>
 <path d="M10.8 11.2 L15 15.4" stroke="#2a2a2a" stroke-width="1.5" stroke-linecap="round"/></g></svg>
<div class="bt n" style="left:603px;top:122px"><span>T413109</span></div>
<div class="bt n" style="left:686px;top:122px"><span>1</span></div>
<div class="bt n" style="left:722px;top:122px"><span>T400484</span></div>
<div class="bt" style="left:806px;top:122px"><span>AIR FILTER ASSEMBLY</span></div>
<div class="row rc" style="top:142px"></div>
<svg class="ricons" style="top:142px" width="79" height="19" viewBox="0 0 79 19"><g transform="translate(6 4)"><g fill="#79b32b">
 <circle cx="5" cy="5" r="3.7"/>
 <rect x="3.9" y="0" width="2.2" height="10" rx="0.6"/>
 <rect x="0" y="3.9" width="10" height="2.2" rx="0.6"/>
 <rect x="3.9" y="0" width="2.2" height="10" rx="0.6" transform="rotate(45 5 5)"/>
 <rect x="3.9" y="0" width="2.2" height="10" rx="0.6" transform="rotate(-45 5 5)"/>
 </g>
 <circle cx="5" cy="5" r="1.6" fill="#e4f6c8"/></g><g transform="translate(21 2)"><path d="M0.9 0.9 L3 2.6" stroke="#3d6ba5" stroke-width="1.5" stroke-linecap="round"/>
 <path d="M2.6 2.2 H16.2 L13.6 7.4 H3.4 Z" fill="#4776b0"/>
 <g fill="#e6eef8"><rect x="3.7" y="3.1" width="1.3" height="1.1"/><rect x="5.9" y="3.1" width="1.1" height="1.1"/><rect x="8" y="3.1" width="1.1" height="1.1"/><rect x="10" y="3.1" width="1.1" height="1.1"/><rect x="12.2" y="3.1" width="1.1" height="1.1"/>
 <rect x="4.5" y="5.1" width="1.1" height="1.1"/><rect x="6.2" y="5.1" width="1.1" height="1.1"/><rect x="8.1" y="5.1" width="1.1" height="1.1"/><rect x="10" y="5.1" width="1.1" height="1.1"/><rect x="12" y="5.1" width="1.1" height="1.1"/></g>
 <path d="M4.1 7.2 V10.5 H15.4" fill="none" stroke="#3d6ba5" stroke-width="1.1"/>
 <path d="M5 10.5 H9" stroke="#7ab8f0" stroke-width="0.8"/>
 <rect x="4" y="11" width="2" height="2.2" fill="#2e88e0"/><rect x="12.2" y="11" width="2" height="2.2" fill="#2e88e0"/></g><g transform="translate(40 2)"><circle cx="7.5" cy="7.5" r="7" fill="url(#gc)"/>
 <rect x="6.4" y="3" width="2.2" height="1.8" fill="#2f60a0"/>
 <rect x="6.4" y="5.6" width="2.2" height="5.2" fill="#2f60a0"/></g></svg>
<svg class="rsym" style="top:142px" width="83" height="19" viewBox="0 0 83 19"><g transform="translate(3 0)"><linearGradient id="pg" x1="0" y1="0" x2="1" y2="0"><stop offset="0" stop-color="#c8c8c0"/><stop offset="0.25" stop-color="#ffffff"/><stop offset="0.8" stop-color="#f0f0f0"/><stop offset="1" stop-color="#c0c0b8"/></linearGradient>
 <rect x="0.2" y="4" width="1.3" height="10.6" fill="#6e6e58"/>
 <rect x="14.2" y="4" width="1.3" height="10.6" fill="#6e6e58"/>
 <rect x="1.8" y="2" width="3.6" height="1.4" fill="#9c9a62"/><rect x="10.4" y="2" width="3.6" height="1.4" fill="#a8a660"/>
 <path d="M1.4 3.8 L5.2 3.2 L7.8 4 L10.4 3.2 L14.2 3.8 L14.2 14 L7.8 14.4 L1.4 14 Z" fill="url(#pg)"/>
 <path d="M1.4 14.2 Q4.5 13.4 7.8 14.7 Q11 13.4 14.2 14.2" fill="none" stroke="#5a5a5a" stroke-width="1.1"/>
 <ellipse cx="8.4" cy="7.9" rx="3" ry="3.9" fill="none" stroke="#3a3a3a" stroke-width="1"/>
 <path d="M10.8 11.2 L15 15.4" stroke="#2a2a2a" stroke-width="1.5" stroke-linecap="round"/></g></svg>
<div class="bt n" style="left:603px;top:142px"><span>T413117</span></div>
<div class="bt n" style="left:686px;top:142px"><span>2</span></div>
<div class="bt n" style="left:722px;top:142px"><span>T413117</span></div>
<div class="bt" style="left:806px;top:142px"><span>BRACKET</span></div>
<div class="row rs" style="top:162px;height:19px"></div>
<div style="position:absolute;left:401px;top:161px;width:571px;height:1px;background:#fefee2"></div>
<div style="position:absolute;left:401px;top:181px;width:571px;height:1px;background:#f6f6ee"></div>
<svg class="ricons" style="top:162px" width="79" height="19" viewBox="0 0 79 19"><g transform="translate(6 4)"><g fill="#79b32b">
 <circle cx="5" cy="5" r="3.7"/>
 <rect x="3.9" y="0" width="2.2" height="10" rx="0.6"/>
 <rect x="0" y="3.9" width="10" height="2.2" rx="0.6"/>
 <rect x="3.9" y="0" width="2.2" height="10" rx="0.6" transform="rotate(45 5 5)"/>
 <rect x="3.9" y="0" width="2.2" height="10" rx="0.6" transform="rotate(-45 5 5)"/>
 </g>
 <circle cx="5" cy="5" r="1.6" fill="#3399ff"/></g><g transform="translate(21 2)" opacity="0.65"><path d="M0.9 0.9 L3 2.6" stroke="#3d6ba5" stroke-width="1.5" stroke-linecap="round"/>
 <path d="M2.6 2.2 H16.2 L13.6 7.4 H3.4 Z" fill="#4776b0"/>
 <g fill="#e6eef8"><rect x="3.7" y="3.1" width="1.3" height="1.1"/><rect x="5.9" y="3.1" width="1.1" height="1.1"/><rect x="8" y="3.1" width="1.1" height="1.1"/><rect x="10" y="3.1" width="1.1" height="1.1"/><rect x="12.2" y="3.1" width="1.1" height="1.1"/>
 <rect x="4.5" y="5.1" width="1.1" height="1.1"/><rect x="6.2" y="5.1" width="1.1" height="1.1"/><rect x="8.1" y="5.1" width="1.1" height="1.1"/><rect x="10" y="5.1" width="1.1" height="1.1"/><rect x="12" y="5.1" width="1.1" height="1.1"/></g>
 <path d="M4.1 7.2 V10.5 H15.4" fill="none" stroke="#3d6ba5" stroke-width="1.1"/>
 <path d="M5 10.5 H9" stroke="#7ab8f0" stroke-width="0.8"/>
 <rect x="4" y="11" width="2" height="2.2" fill="#2e88e0"/><rect x="12.2" y="11" width="2" height="2.2" fill="#2e88e0"/></g><g transform="translate(40 2)"><circle cx="7.5" cy="7.5" r="7" fill="url(#gc)"/>
 <rect x="6.4" y="3" width="2.2" height="1.8" fill="#2f60a0"/>
 <rect x="6.4" y="5.6" width="2.2" height="5.2" fill="#2f60a0"/></g></svg>
<div class="bt sel n" style="left:568px;top:162px"><span>1</span></div>
<div class="bt sel n" style="left:603px;top:162px"><span>T400484R</span></div>
<div class="bt sel n" style="left:686px;top:162px"><span>1</span></div>
<div class="bt sel n" style="left:722px;top:162px"><span>T400484R</span></div>
<div class="bt sel" style="left:806px;top:162px"><span>AIR FILTER ASSEMBLY</span></div>
<div class="row rw" style="top:182px"></div>
<svg class="ricons" style="top:182px" width="79" height="19" viewBox="0 0 79 19"><g transform="translate(6 4)"><g fill="#79b32b">
 <circle cx="5" cy="5" r="3.7"/>
 <rect x="3.9" y="0" width="2.2" height="10" rx="0.6"/>
 <rect x="0" y="3.9" width="10" height="2.2" rx="0.6"/>
 <rect x="3.9" y="0" width="2.2" height="10" rx="0.6" transform="rotate(45 5 5)"/>
 <rect x="3.9" y="0" width="2.2" height="10" rx="0.6" transform="rotate(-45 5 5)"/>
 </g>
 <circle cx="5" cy="5" r="1.6" fill="#e4f6c8"/></g><g transform="translate(21 2)"><path d="M0.9 0.9 L3 2.6" stroke="#3d6ba5" stroke-width="1.5" stroke-linecap="round"/>
 <path d="M2.6 2.2 H16.2 L13.6 7.4 H3.4 Z" fill="#4776b0"/>
 <g fill="#e6eef8"><rect x="3.7" y="3.1" width="1.3" height="1.1"/><rect x="5.9" y="3.1" width="1.1" height="1.1"/><rect x="8" y="3.1" width="1.1" height="1.1"/><rect x="10" y="3.1" width="1.1" height="1.1"/><rect x="12.2" y="3.1" width="1.1" height="1.1"/>
 <rect x="4.5" y="5.1" width="1.1" height="1.1"/><rect x="6.2" y="5.1" width="1.1" height="1.1"/><rect x="8.1" y="5.1" width="1.1" height="1.1"/><rect x="10" y="5.1" width="1.1" height="1.1"/><rect x="12" y="5.1" width="1.1" height="1.1"/></g>
 <path d="M4.1 7.2 V10.5 H15.4" fill="none" stroke="#3d6ba5" stroke-width="1.1"/>
 <path d="M5 10.5 H9" stroke="#7ab8f0" stroke-width="0.8"/>
 <rect x="4" y="11" width="2" height="2.2" fill="#2e88e0"/><rect x="12.2" y="11" width="2" height="2.2" fill="#2e88e0"/></g><g transform="translate(40 2)"><circle cx="7.5" cy="7.5" r="7" fill="url(#gc)"/>
 <path d="M10 4.6 Q9.2 3.3 7.2 3.3 Q4.6 3.3 4.6 5.3 Q4.6 6.7 7.2 7.1 Q10 7.5 10 9.2 Q10 11.1 7.2 11.1 Q5.2 11.1 4.3 9.8" fill="none" stroke="#135fa0" stroke-width="2"/></g><g transform="translate(58 2)"><circle cx="7.5" cy="7.5" r="7" fill="url(#gc)"/>
 <rect x="6.4" y="3" width="2.2" height="1.8" fill="#2f60a0"/>
 <rect x="6.4" y="5.6" width="2.2" height="5.2" fill="#2f60a0"/></g></svg>
<svg class="rsym" style="top:182px" width="83" height="19" viewBox="0 0 83 19"><g transform="translate(3 0)"><linearGradient id="pg" x1="0" y1="0" x2="1" y2="0"><stop offset="0" stop-color="#c8c8c0"/><stop offset="0.25" stop-color="#ffffff"/><stop offset="0.8" stop-color="#f0f0f0"/><stop offset="1" stop-color="#c0c0b8"/></linearGradient>
 <rect x="0.2" y="4" width="1.3" height="10.6" fill="#6e6e58"/>
 <rect x="14.2" y="4" width="1.3" height="10.6" fill="#6e6e58"/>
 <rect x="1.8" y="2" width="3.6" height="1.4" fill="#9c9a62"/><rect x="10.4" y="2" width="3.6" height="1.4" fill="#a8a660"/>
 <path d="M1.4 3.8 L5.2 3.2 L7.8 4 L10.4 3.2 L14.2 3.8 L14.2 14 L7.8 14.4 L1.4 14 Z" fill="url(#pg)"/>
 <path d="M1.4 14.2 Q4.5 13.4 7.8 14.7 Q11 13.4 14.2 14.2" fill="none" stroke="#5a5a5a" stroke-width="1.1"/>
 <ellipse cx="8.4" cy="7.9" rx="3" ry="3.9" fill="none" stroke="#3a3a3a" stroke-width="1"/>
 <path d="M10.8 11.2 L15 15.4" stroke="#2a2a2a" stroke-width="1.5" stroke-linecap="round"/></g></svg>
<div class="bt n" style="left:568px;top:182px"><span>1</span></div>
<div class="bt n" style="left:603px;top:182px"><span>T412701</span></div>
<div class="bt n" style="left:686px;top:182px"><span>1</span></div>
<div class="bt n" style="left:722px;top:182px"><span>T412701</span></div>
<div class="bt" style="left:806px;top:182px"><span>SENSOR</span></div>
<div class="row rw" style="top:202px"></div>
<svg class="ricons" style="top:202px" width="79" height="19" viewBox="0 0 79 19"><g transform="translate(6 4)"><g fill="#79b32b">
 <circle cx="5" cy="5" r="3.7"/>
 <rect x="3.9" y="0" width="2.2" height="10" rx="0.6"/>
 <rect x="0" y="3.9" width="10" height="2.2" rx="0.6"/>
 <rect x="3.9" y="0" width="2.2" height="10" rx="0.6" transform="rotate(45 5 5)"/>
 <rect x="3.9" y="0" width="2.2" height="10" rx="0.6" transform="rotate(-45 5 5)"/>
 </g>
 <circle cx="5" cy="5" r="1.6" fill="#e4f6c8"/></g><g transform="translate(21 2)"><path d="M0.9 0.9 L3 2.6" stroke="#3d6ba5" stroke-width="1.5" stroke-linecap="round"/>
 <path d="M2.6 2.2 H16.2 L13.6 7.4 H3.4 Z" fill="#4776b0"/>
 <g fill="#e6eef8"><rect x="3.7" y="3.1" width="1.3" height="1.1"/><rect x="5.9" y="3.1" width="1.1" height="1.1"/><rect x="8" y="3.1" width="1.1" height="1.1"/><rect x="10" y="3.1" width="1.1" height="1.1"/><rect x="12.2" y="3.1" width="1.1" height="1.1"/>
 <rect x="4.5" y="5.1" width="1.1" height="1.1"/><rect x="6.2" y="5.1" width="1.1" height="1.1"/><rect x="8.1" y="5.1" width="1.1" height="1.1"/><rect x="10" y="5.1" width="1.1" height="1.1"/><rect x="12" y="5.1" width="1.1" height="1.1"/></g>
 <path d="M4.1 7.2 V10.5 H15.4" fill="none" stroke="#3d6ba5" stroke-width="1.1"/>
 <path d="M5 10.5 H9" stroke="#7ab8f0" stroke-width="0.8"/>
 <rect x="4" y="11" width="2" height="2.2" fill="#2e88e0"/><rect x="12.2" y="11" width="2" height="2.2" fill="#2e88e0"/></g><g transform="translate(40 2)"><circle cx="7.5" cy="7.5" r="7" fill="url(#gc)"/>
 <rect x="6.4" y="3" width="2.2" height="1.8" fill="#2f60a0"/>
 <rect x="6.4" y="5.6" width="2.2" height="5.2" fill="#2f60a0"/></g></svg>
<div class="bt n" style="left:568px;top:202px"><span>2</span></div>
<div class="bt n" style="left:603px;top:202px"><span>T412234</span></div>
<div class="bt n" style="left:686px;top:202px"><span>2</span></div>
<div class="bt n" style="left:722px;top:202px"><span>T412234</span></div>
<div class="bt" style="left:806px;top:202px"><span>BRACKET</span></div>
<div class="row rw" style="top:222px"></div>
<svg class="ricons" style="top:222px" width="79" height="19" viewBox="0 0 79 19"><g transform="translate(6 4)"><g fill="#79b32b">
 <circle cx="5" cy="5" r="3.7"/>
 <rect x="3.9" y="0" width="2.2" height="10" rx="0.6"/>
 <rect x="0" y="3.9" width="10" height="2.2" rx="0.6"/>
 <rect x="3.9" y="0" width="2.2" height="10" rx="0.6" transform="rotate(45 5 5)"/>
 <rect x="3.9" y="0" width="2.2" height="10" rx="0.6" transform="rotate(-45 5 5)"/>
 </g>
 <circle cx="5" cy="5" r="1.6" fill="#e4f6c8"/></g><g transform="translate(21 2)"><path d="M0.9 0.9 L3 2.6" stroke="#3d6ba5" stroke-width="1.5" stroke-linecap="round"/>
 <path d="M2.6 2.2 H16.2 L13.6 7.4 H3.4 Z" fill="#4776b0"/>
 <g fill="#e6eef8"><rect x="3.7" y="3.1" width="1.3" height="1.1"/><rect x="5.9" y="3.1" width="1.1" height="1.1"/><rect x="8" y="3.1" width="1.1" height="1.1"/><rect x="10" y="3.1" width="1.1" height="1.1"/><rect x="12.2" y="3.1" width="1.1" height="1.1"/>
 <rect x="4.5" y="5.1" width="1.1" height="1.1"/><rect x="6.2" y="5.1" width="1.1" height="1.1"/><rect x="8.1" y="5.1" width="1.1" height="1.1"/><rect x="10" y="5.1" width="1.1" height="1.1"/><rect x="12" y="5.1" width="1.1" height="1.1"/></g>
 <path d="M4.1 7.2 V10.5 H15.4" fill="none" stroke="#3d6ba5" stroke-width="1.1"/>
 <path d="M5 10.5 H9" stroke="#7ab8f0" stroke-width="0.8"/>
 <rect x="4" y="11" width="2" height="2.2" fill="#2e88e0"/><rect x="12.2" y="11" width="2" height="2.2" fill="#2e88e0"/></g><g transform="translate(40 2)"><circle cx="7.5" cy="7.5" r="7" fill="url(#gc)"/>
 <path d="M10 4.6 Q9.2 3.3 7.2 3.3 Q4.6 3.3 4.6 5.3 Q4.6 6.7 7.2 7.1 Q10 7.5 10 9.2 Q10 11.1 7.2 11.1 Q5.2 11.1 4.3 9.8" fill="none" stroke="#135fa0" stroke-width="2"/></g><g transform="translate(58 2)"><circle cx="7.5" cy="7.5" r="7" fill="url(#gc)"/>
 <rect x="6.4" y="3" width="2.2" height="1.8" fill="#2f60a0"/>
 <rect x="6.4" y="5.6" width="2.2" height="5.2" fill="#2f60a0"/></g></svg>
<svg class="rsym" style="top:222px" width="83" height="19" viewBox="0 0 83 19"><g transform="translate(3 0)"><linearGradient id="pg" x1="0" y1="0" x2="1" y2="0"><stop offset="0" stop-color="#c8c8c0"/><stop offset="0.25" stop-color="#ffffff"/><stop offset="0.8" stop-color="#f0f0f0"/><stop offset="1" stop-color="#c0c0b8"/></linearGradient>
 <rect x="0.2" y="4" width="1.3" height="10.6" fill="#6e6e58"/>
 <rect x="14.2" y="4" width="1.3" height="10.6" fill="#6e6e58"/>
 <rect x="1.8" y="2" width="3.6" height="1.4" fill="#9c9a62"/><rect x="10.4" y="2" width="3.6" height="1.4" fill="#a8a660"/>
 <path d="M1.4 3.8 L5.2 3.2 L7.8 4 L10.4 3.2 L14.2 3.8 L14.2 14 L7.8 14.4 L1.4 14 Z" fill="url(#pg)"/>
 <path d="M1.4 14.2 Q4.5 13.4 7.8 14.7 Q11 13.4 14.2 14.2" fill="none" stroke="#5a5a5a" stroke-width="1.1"/>
 <ellipse cx="8.4" cy="7.9" rx="3" ry="3.9" fill="none" stroke="#3a3a3a" stroke-width="1"/>
 <path d="M10.8 11.2 L15 15.4" stroke="#2a2a2a" stroke-width="1.5" stroke-linecap="round"/></g></svg>
<div class="bt n" style="left:568px;top:222px"><span>2</span></div>
<div class="bt n" style="left:603px;top:222px"><span>T412701</span></div>
<div class="bt n" style="left:686px;top:222px"><span>1</span></div>
<div class="bt n" style="left:722px;top:222px"><span>T412701</span></div>
<div class="bt" style="left:806px;top:222px"><span>SENSOR</span></div>
<div class="row rw" style="top:242px"></div>
<svg class="ricons" style="top:242px" width="79" height="19" viewBox="0 0 79 19"><g transform="translate(6 4)"><g fill="#79b32b">
 <circle cx="5" cy="5" r="3.7"/>
 <rect x="3.9" y="0" width="2.2" height="10" rx="0.6"/>
 <rect x="0" y="3.9" width="10" height="2.2" rx="0.6"/>
 <rect x="3.9" y="0" width="2.2" height="10" rx="0.6" transform="rotate(45 5 5)"/>
 <rect x="3.9" y="0" width="2.2" height="10" rx="0.6" transform="rotate(-45 5 5)"/>
 </g>
 <circle cx="5" cy="5" r="1.6" fill="#e4f6c8"/></g><g transform="translate(21 2)"><path d="M0.9 0.9 L3 2.6" stroke="#3d6ba5" stroke-width="1.5" stroke-linecap="round"/>
 <path d="M2.6 2.2 H16.2 L13.6 7.4 H3.4 Z" fill="#4776b0"/>
 <g fill="#e6eef8"><rect x="3.7" y="3.1" width="1.3" height="1.1"/><rect x="5.9" y="3.1" width="1.1" height="1.1"/><rect x="8" y="3.1" width="1.1" height="1.1"/><rect x="10" y="3.1" width="1.1" height="1.1"/><rect x="12.2" y="3.1" width="1.1" height="1.1"/>
 <rect x="4.5" y="5.1" width="1.1" height="1.1"/><rect x="6.2" y="5.1" width="1.1" height="1.1"/><rect x="8.1" y="5.1" width="1.1" height="1.1"/><rect x="10" y="5.1" width="1.1" height="1.1"/><rect x="12" y="5.1" width="1.1" height="1.1"/></g>
 <path d="M4.1 7.2 V10.5 H15.4" fill="none" stroke="#3d6ba5" stroke-width="1.1"/>
 <path d="M5 10.5 H9" stroke="#7ab8f0" stroke-width="0.8"/>
 <rect x="4" y="11" width="2" height="2.2" fill="#2e88e0"/><rect x="12.2" y="11" width="2" height="2.2" fill="#2e88e0"/></g><g transform="translate(40 2)"><circle cx="7.5" cy="7.5" r="7" fill="url(#gc)"/>
 <path d="M10 4.6 Q9.2 3.3 7.2 3.3 Q4.6 3.3 4.6 5.3 Q4.6 6.7 7.2 7.1 Q10 7.5 10 9.2 Q10 11.1 7.2 11.1 Q5.2 11.1 4.3 9.8" fill="none" stroke="#135fa0" stroke-width="2"/></g><g transform="translate(58 2)"><circle cx="7.5" cy="7.5" r="7" fill="url(#gc)"/>
 <rect x="6.4" y="3" width="2.2" height="1.8" fill="#2f60a0"/>
 <rect x="6.4" y="5.6" width="2.2" height="5.2" fill="#2f60a0"/></g></svg>
<svg class="rsym" style="top:242px" width="83" height="19" viewBox="0 0 83 19"><g transform="translate(3 0)"><linearGradient id="pg" x1="0" y1="0" x2="1" y2="0"><stop offset="0" stop-color="#c8c8c0"/><stop offset="0.25" stop-color="#ffffff"/><stop offset="0.8" stop-color="#f0f0f0"/><stop offset="1" stop-color="#c0c0b8"/></linearGradient>
 <rect x="0.2" y="4" width="1.3" height="10.6" fill="#6e6e58"/>
 <rect x="14.2" y="4" width="1.3" height="10.6" fill="#6e6e58"/>
 <rect x="1.8" y="2" width="3.6" height="1.4" fill="#9c9a62"/><rect x="10.4" y="2" width="3.6" height="1.4" fill="#a8a660"/>
 <path d="M1.4 3.8 L5.2 3.2 L7.8 4 L10.4 3.2 L14.2 3.8 L14.2 14 L7.8 14.4 L1.4 14 Z" fill="url(#pg)"/>
 <path d="M1.4 14.2 Q4.5 13.4 7.8 14.7 Q11 13.4 14.2 14.2" fill="none" stroke="#5a5a5a" stroke-width="1.1"/>
 <ellipse cx="8.4" cy="7.9" rx="3" ry="3.9" fill="none" stroke="#3a3a3a" stroke-width="1"/>
 <path d="M10.8 11.2 L15 15.4" stroke="#2a2a2a" stroke-width="1.5" stroke-linecap="round"/></g></svg>
<div class="bt n" style="left:568px;top:242px"><span>3</span></div>
<div class="bt n" style="left:603px;top:242px"><span>T412701</span></div>
<div class="bt n" style="left:686px;top:242px"><span>1</span></div>
<div class="bt n" style="left:722px;top:242px"><span>T412701</span></div>
<div class="bt" style="left:806px;top:242px"><span>SENSOR</span></div>
<div class="row rw" style="top:262px"></div>
<svg class="ricons" style="top:262px" width="79" height="19" viewBox="0 0 79 19"><g transform="translate(6 4)"><g fill="#79b32b">
 <circle cx="5" cy="5" r="3.7"/>
 <rect x="3.9" y="0" width="2.2" height="10" rx="0.6"/>
 <rect x="0" y="3.9" width="10" height="2.2" rx="0.6"/>
 <rect x="3.9" y="0" width="2.2" height="10" rx="0.6" transform="rotate(45 5 5)"/>
 <rect x="3.9" y="0" width="2.2" height="10" rx="0.6" transform="rotate(-45 5 5)"/>
 </g>
 <circle cx="5" cy="5" r="1.6" fill="#e4f6c8"/></g><g transform="translate(21 2)"><path d="M0.9 0.9 L3 2.6" stroke="#3d6ba5" stroke-width="1.5" stroke-linecap="round"/>
 <path d="M2.6 2.2 H16.2 L13.6 7.4 H3.4 Z" fill="#4776b0"/>
 <g fill="#e6eef8"><rect x="3.7" y="3.1" width="1.3" height="1.1"/><rect x="5.9" y="3.1" width="1.1" height="1.1"/><rect x="8" y="3.1" width="1.1" height="1.1"/><rect x="10" y="3.1" width="1.1" height="1.1"/><rect x="12.2" y="3.1" width="1.1" height="1.1"/>
 <rect x="4.5" y="5.1" width="1.1" height="1.1"/><rect x="6.2" y="5.1" width="1.1" height="1.1"/><rect x="8.1" y="5.1" width="1.1" height="1.1"/><rect x="10" y="5.1" width="1.1" height="1.1"/><rect x="12" y="5.1" width="1.1" height="1.1"/></g>
 <path d="M4.1 7.2 V10.5 H15.4" fill="none" stroke="#3d6ba5" stroke-width="1.1"/>
 <path d="M5 10.5 H9" stroke="#7ab8f0" stroke-width="0.8"/>
 <rect x="4" y="11" width="2" height="2.2" fill="#2e88e0"/><rect x="12.2" y="11" width="2" height="2.2" fill="#2e88e0"/></g><g transform="translate(40 2)"><circle cx="7.5" cy="7.5" r="7" fill="url(#gc)"/>
 <rect x="6.4" y="3" width="2.2" height="1.8" fill="#2f60a0"/>
 <rect x="6.4" y="5.6" width="2.2" height="5.2" fill="#2f60a0"/></g></svg>
<div class="bt n" style="left:568px;top:262px"><span>4</span></div>
<div class="bt n" style="left:603px;top:262px"><span>T412343</span></div>
<div class="bt n" style="left:686px;top:262px"><span>4</span></div>
<div class="bt n" style="left:722px;top:262px"><span>T412343</span></div>
<div class="bt" style="left:806px;top:262px"><span>SCREW</span></div>
<div class="row rw" style="top:282px"></div>
<svg class="ricons" style="top:282px" width="79" height="19" viewBox="0 0 79 19"><g transform="translate(6 4)"><g fill="#79b32b">
 <circle cx="5" cy="5" r="3.7"/>
 <rect x="3.9" y="0" width="2.2" height="10" rx="0.6"/>
 <rect x="0" y="3.9" width="10" height="2.2" rx="0.6"/>
 <rect x="3.9" y="0" width="2.2" height="10" rx="0.6" transform="rotate(45 5 5)"/>
 <rect x="3.9" y="0" width="2.2" height="10" rx="0.6" transform="rotate(-45 5 5)"/>
 </g>
 <circle cx="5" cy="5" r="1.6" fill="#e4f6c8"/></g><g transform="translate(21 2)"><path d="M0.9 0.9 L3 2.6" stroke="#3d6ba5" stroke-width="1.5" stroke-linecap="round"/>
 <path d="M2.6 2.2 H16.2 L13.6 7.4 H3.4 Z" fill="#4776b0"/>
 <g fill="#e6eef8"><rect x="3.7" y="3.1" width="1.3" height="1.1"/><rect x="5.9" y="3.1" width="1.1" height="1.1"/><rect x="8" y="3.1" width="1.1" height="1.1"/><rect x="10" y="3.1" width="1.1" height="1.1"/><rect x="12.2" y="3.1" width="1.1" height="1.1"/>
 <rect x="4.5" y="5.1" width="1.1" height="1.1"/><rect x="6.2" y="5.1" width="1.1" height="1.1"/><rect x="8.1" y="5.1" width="1.1" height="1.1"/><rect x="10" y="5.1" width="1.1" height="1.1"/><rect x="12" y="5.1" width="1.1" height="1.1"/></g>
 <path d="M4.1 7.2 V10.5 H15.4" fill="none" stroke="#3d6ba5" stroke-width="1.1"/>
 <path d="M5 10.5 H9" stroke="#7ab8f0" stroke-width="0.8"/>
 <rect x="4" y="11" width="2" height="2.2" fill="#2e88e0"/><rect x="12.2" y="11" width="2" height="2.2" fill="#2e88e0"/></g><g transform="translate(40 2)"><circle cx="7.5" cy="7.5" r="7" fill="url(#gc)"/>
 <path d="M10 4.6 Q9.2 3.3 7.2 3.3 Q4.6 3.3 4.6 5.3 Q4.6 6.7 7.2 7.1 Q10 7.5 10 9.2 Q10 11.1 7.2 11.1 Q5.2 11.1 4.3 9.8" fill="none" stroke="#135fa0" stroke-width="2"/></g><g transform="translate(58 2)"><circle cx="7.5" cy="7.5" r="7" fill="url(#gc)"/>
 <rect x="6.4" y="3" width="2.2" height="1.8" fill="#2f60a0"/>
 <rect x="6.4" y="5.6" width="2.2" height="5.2" fill="#2f60a0"/></g></svg>
<svg class="rsym" style="top:282px" width="83" height="19" viewBox="0 0 83 19"><g transform="translate(3 0)"><linearGradient id="pg" x1="0" y1="0" x2="1" y2="0"><stop offset="0" stop-color="#c8c8c0"/><stop offset="0.25" stop-color="#ffffff"/><stop offset="0.8" stop-color="#f0f0f0"/><stop offset="1" stop-color="#c0c0b8"/></linearGradient>
 <rect x="0.2" y="4" width="1.3" height="10.6" fill="#6e6e58"/>
 <rect x="14.2" y="4" width="1.3" height="10.6" fill="#6e6e58"/>
 <rect x="1.8" y="2" width="3.6" height="1.4" fill="#9c9a62"/><rect x="10.4" y="2" width="3.6" height="1.4" fill="#a8a660"/>
 <path d="M1.4 3.8 L5.2 3.2 L7.8 4 L10.4 3.2 L14.2 3.8 L14.2 14 L7.8 14.4 L1.4 14 Z" fill="url(#pg)"/>
 <path d="M1.4 14.2 Q4.5 13.4 7.8 14.7 Q11 13.4 14.2 14.2" fill="none" stroke="#5a5a5a" stroke-width="1.1"/>
 <ellipse cx="8.4" cy="7.9" rx="3" ry="3.9" fill="none" stroke="#3a3a3a" stroke-width="1"/>
 <path d="M10.8 11.2 L15 15.4" stroke="#2a2a2a" stroke-width="1.5" stroke-linecap="round"/></g></svg>
<div class="bt n" style="left:568px;top:282px"><span>4</span></div>
<div class="bt n" style="left:603px;top:282px"><span>T412701</span></div>
<div class="bt n" style="left:686px;top:282px"><span>1</span></div>
<div class="bt n" style="left:722px;top:282px"><span>T412701</span></div>
<div class="bt" style="left:806px;top:282px"><span>SENSOR</span></div>
<div class="row rw" style="top:302px"></div>
<svg class="ricons" style="top:302px" width="79" height="19" viewBox="0 0 79 19"><g transform="translate(6 4)"><g fill="#79b32b">
 <circle cx="5" cy="5" r="3.7"/>
 <rect x="3.9" y="0" width="2.2" height="10" rx="0.6"/>
 <rect x="0" y="3.9" width="10" height="2.2" rx="0.6"/>
 <rect x="3.9" y="0" width="2.2" height="10" rx="0.6" transform="rotate(45 5 5)"/>
 <rect x="3.9" y="0" width="2.2" height="10" rx="0.6" transform="rotate(-45 5 5)"/>
 </g>
 <circle cx="5" cy="5" r="1.6" fill="#e4f6c8"/></g><g transform="translate(21 2)"><path d="M0.9 0.9 L3 2.6" stroke="#3d6ba5" stroke-width="1.5" stroke-linecap="round"/>
 <path d="M2.6 2.2 H16.2 L13.6 7.4 H3.4 Z" fill="#4776b0"/>
 <g fill="#e6eef8"><rect x="3.7" y="3.1" width="1.3" height="1.1"/><rect x="5.9" y="3.1" width="1.1" height="1.1"/><rect x="8" y="3.1" width="1.1" height="1.1"/><rect x="10" y="3.1" width="1.1" height="1.1"/><rect x="12.2" y="3.1" width="1.1" height="1.1"/>
 <rect x="4.5" y="5.1" width="1.1" height="1.1"/><rect x="6.2" y="5.1" width="1.1" height="1.1"/><rect x="8.1" y="5.1" width="1.1" height="1.1"/><rect x="10" y="5.1" width="1.1" height="1.1"/><rect x="12" y="5.1" width="1.1" height="1.1"/></g>
 <path d="M4.1 7.2 V10.5 H15.4" fill="none" stroke="#3d6ba5" stroke-width="1.1"/>
 <path d="M5 10.5 H9" stroke="#7ab8f0" stroke-width="0.8"/>
 <rect x="4" y="11" width="2" height="2.2" fill="#2e88e0"/><rect x="12.2" y="11" width="2" height="2.2" fill="#2e88e0"/></g><g transform="translate(40 2)"><circle cx="7.5" cy="7.5" r="7" fill="url(#gc)"/>
 <rect x="6.4" y="3" width="2.2" height="1.8" fill="#2f60a0"/>
 <rect x="6.4" y="5.6" width="2.2" height="5.2" fill="#2f60a0"/></g></svg>
<div class="bt n" style="left:568px;top:302px"><span>5</span></div>
<div class="bt n" style="left:603px;top:302px"><span>T401231</span></div>
<div class="bt n" style="left:686px;top:302px"><span>1</span></div>
<div class="bt n" style="left:722px;top:302px"><span>T401231</span></div>
<div class="bt" style="left:806px;top:302px"><span>TEMPERATURE SENSOR</span></div>
<div class="row rw" style="top:322px"></div>
<svg class="ricons" style="top:322px" width="79" height="19" viewBox="0 0 79 19"><g transform="translate(6 4)"><g fill="#79b32b">
 <circle cx="5" cy="5" r="3.7"/>
 <rect x="3.9" y="0" width="2.2" height="10" rx="0.6"/>
 <rect x="0" y="3.9" width="10" height="2.2" rx="0.6"/>
 <rect x="3.9" y="0" width="2.2" height="10" rx="0.6" transform="rotate(45 5 5)"/>
 <rect x="3.9" y="0" width="2.2" height="10" rx="0.6" transform="rotate(-45 5 5)"/>
 </g>
 <circle cx="5" cy="5" r="1.6" fill="#e4f6c8"/></g><g transform="translate(21 2)"><path d="M0.9 0.9 L3 2.6" stroke="#3d6ba5" stroke-width="1.5" stroke-linecap="round"/>
 <path d="M2.6 2.2 H16.2 L13.6 7.4 H3.4 Z" fill="#4776b0"/>
 <g fill="#e6eef8"><rect x="3.7" y="3.1" width="1.3" height="1.1"/><rect x="5.9" y="3.1" width="1.1" height="1.1"/><rect x="8" y="3.1" width="1.1" height="1.1"/><rect x="10" y="3.1" width="1.1" height="1.1"/><rect x="12.2" y="3.1" width="1.1" height="1.1"/>
 <rect x="4.5" y="5.1" width="1.1" height="1.1"/><rect x="6.2" y="5.1" width="1.1" height="1.1"/><rect x="8.1" y="5.1" width="1.1" height="1.1"/><rect x="10" y="5.1" width="1.1" height="1.1"/><rect x="12" y="5.1" width="1.1" height="1.1"/></g>
 <path d="M4.1 7.2 V10.5 H15.4" fill="none" stroke="#3d6ba5" stroke-width="1.1"/>
 <path d="M5 10.5 H9" stroke="#7ab8f0" stroke-width="0.8"/>
 <rect x="4" y="11" width="2" height="2.2" fill="#2e88e0"/><rect x="12.2" y="11" width="2" height="2.2" fill="#2e88e0"/></g><g transform="translate(40 2)"><circle cx="7.5" cy="7.5" r="7" fill="url(#gc)"/>
 <path d="M10 4.6 Q9.2 3.3 7.2 3.3 Q4.6 3.3 4.6 5.3 Q4.6 6.7 7.2 7.1 Q10 7.5 10 9.2 Q10 11.1 7.2 11.1 Q5.2 11.1 4.3 9.8" fill="none" stroke="#135fa0" stroke-width="2"/></g><g transform="translate(58 2)"><circle cx="7.5" cy="7.5" r="7" fill="url(#gc)"/>
 <rect x="6.4" y="3" width="2.2" height="1.8" fill="#2f60a0"/>
 <rect x="6.4" y="5.6" width="2.2" height="5.2" fill="#2f60a0"/></g></svg>
<svg class="rsym" style="top:322px" width="83" height="19" viewBox="0 0 83 19"><g transform="translate(3 0)"><linearGradient id="pg" x1="0" y1="0" x2="1" y2="0"><stop offset="0" stop-color="#c8c8c0"/><stop offset="0.25" stop-color="#ffffff"/><stop offset="0.8" stop-color="#f0f0f0"/><stop offset="1" stop-color="#c0c0b8"/></linearGradient>
 <rect x="0.2" y="4" width="1.3" height="10.6" fill="#6e6e58"/>
 <rect x="14.2" y="4" width="1.3" height="10.6" fill="#6e6e58"/>
 <rect x="1.8" y="2" width="3.6" height="1.4" fill="#9c9a62"/><rect x="10.4" y="2" width="3.6" height="1.4" fill="#a8a660"/>
 <path d="M1.4 3.8 L5.2 3.2 L7.8 4 L10.4 3.2 L14.2 3.8 L14.2 14 L7.8 14.4 L1.4 14 Z" fill="url(#pg)"/>
 <path d="M1.4 14.2 Q4.5 13.4 7.8 14.7 Q11 13.4 14.2 14.2" fill="none" stroke="#5a5a5a" stroke-width="1.1"/>
 <ellipse cx="8.4" cy="7.9" rx="3" ry="3.9" fill="none" stroke="#3a3a3a" stroke-width="1"/>
 <path d="M10.8 11.2 L15 15.4" stroke="#2a2a2a" stroke-width="1.5" stroke-linecap="round"/></g></svg>
<div class="bt n" style="left:568px;top:322px"><span>5</span></div>
<div class="bt n" style="left:603px;top:322px"><span>T412698</span></div>
<div class="bt n" style="left:686px;top:322px"><span>1</span></div>
<div class="bt n" style="left:722px;top:322px"><span>T413978</span></div>
<div class="bt" style="left:806px;top:322px"><span>TEMPERATURE SENSOR</span></div>
<div class="row rw" style="top:342px"></div>
<svg class="ricons" style="top:342px" width="79" height="19" viewBox="0 0 79 19"><g transform="translate(6 4)"><g fill="#79b32b">
 <circle cx="5" cy="5" r="3.7"/>
 <rect x="3.9" y="0" width="2.2" height="10" rx="0.6"/>
 <rect x="0" y="3.9" width="10" height="2.2" rx="0.6"/>
 <rect x="3.9" y="0" width="2.2" height="10" rx="0.6" transform="rotate(45 5 5)"/>
 <rect x="3.9" y="0" width="2.2" height="10" rx="0.6" transform="rotate(-45 5 5)"/>
 </g>
 <circle cx="5" cy="5" r="1.6" fill="#e4f6c8"/></g><g transform="translate(21 2)"><path d="M0.9 0.9 L3 2.6" stroke="#3d6ba5" stroke-width="1.5" stroke-linecap="round"/>
 <path d="M2.6 2.2 H16.2 L13.6 7.4 H3.4 Z" fill="#4776b0"/>
 <g fill="#e6eef8"><rect x="3.7" y="3.1" width="1.3" height="1.1"/><rect x="5.9" y="3.1" width="1.1" height="1.1"/><rect x="8" y="3.1" width="1.1" height="1.1"/><rect x="10" y="3.1" width="1.1" height="1.1"/><rect x="12.2" y="3.1" width="1.1" height="1.1"/>
 <rect x="4.5" y="5.1" width="1.1" height="1.1"/><rect x="6.2" y="5.1" width="1.1" height="1.1"/><rect x="8.1" y="5.1" width="1.1" height="1.1"/><rect x="10" y="5.1" width="1.1" height="1.1"/><rect x="12" y="5.1" width="1.1" height="1.1"/></g>
 <path d="M4.1 7.2 V10.5 H15.4" fill="none" stroke="#3d6ba5" stroke-width="1.1"/>
 <path d="M5 10.5 H9" stroke="#7ab8f0" stroke-width="0.8"/>
 <rect x="4" y="11" width="2" height="2.2" fill="#2e88e0"/><rect x="12.2" y="11" width="2" height="2.2" fill="#2e88e0"/></g><g transform="translate(40 2)"><circle cx="7.5" cy="7.5" r="7" fill="url(#gc)"/>
 <path d="M10 4.6 Q9.2 3.3 7.2 3.3 Q4.6 3.3 4.6 5.3 Q4.6 6.7 7.2 7.1 Q10 7.5 10 9.2 Q10 11.1 7.2 11.1 Q5.2 11.1 4.3 9.8" fill="none" stroke="#135fa0" stroke-width="2"/></g><g transform="translate(58 2)"><circle cx="7.5" cy="7.5" r="7" fill="url(#gc)"/>
 <rect x="6.4" y="3" width="2.2" height="1.8" fill="#2f60a0"/>
 <rect x="6.4" y="5.6" width="2.2" height="5.2" fill="#2f60a0"/></g></svg>
<svg class="rsym" style="top:342px" width="83" height="19" viewBox="0 0 83 19"><g transform="translate(3 0)"><linearGradient id="pg" x1="0" y1="0" x2="1" y2="0"><stop offset="0" stop-color="#c8c8c0"/><stop offset="0.25" stop-color="#ffffff"/><stop offset="0.8" stop-color="#f0f0f0"/><stop offset="1" stop-color="#c0c0b8"/></linearGradient>
 <rect x="0.2" y="4" width="1.3" height="10.6" fill="#6e6e58"/>
 <rect x="14.2" y="4" width="1.3" height="10.6" fill="#6e6e58"/>
 <rect x="1.8" y="2" width="3.6" height="1.4" fill="#9c9a62"/><rect x="10.4" y="2" width="3.6" height="1.4" fill="#a8a660"/>
 <path d="M1.4 3.8 L5.2 3.2 L7.8 4 L10.4 3.2 L14.2 3.8 L14.2 14 L7.8 14.4 L1.4 14 Z" fill="url(#pg)"/>
 <path d="M1.4 14.2 Q4.5 13.4 7.8 14.7 Q11 13.4 14.2 14.2" fill="none" stroke="#5a5a5a" stroke-width="1.1"/>
 <ellipse cx="8.4" cy="7.9" rx="3" ry="3.9" fill="none" stroke="#3a3a3a" stroke-width="1"/>
 <path d="M10.8 11.2 L15 15.4" stroke="#2a2a2a" stroke-width="1.5" stroke-linecap="round"/></g></svg>
<div class="bt n" style="left:568px;top:342px"><span>5</span></div>
<div class="bt n" style="left:603px;top:342px"><span>T413978</span></div>
<div class="bt n" style="left:686px;top:342px"><span>1</span></div>
<div class="bt n" style="left:722px;top:342px"><span>T413978</span></div>
<div class="bt" style="left:806px;top:342px"><span>TEMPERATURE SENSOR</span></div>
<div class="row rw" style="top:362px"></div>
<svg class="ricons" style="top:362px" width="79" height="19" viewBox="0 0 79 19"><g transform="translate(6 4)"><g fill="#79b32b">
 <circle cx="5" cy="5" r="3.7"/>
 <rect x="3.9" y="0" width="2.2" height="10" rx="0.6"/>
 <rect x="0" y="3.9" width="10" height="2.2" rx="0.6"/>
 <rect x="3.9" y="0" width="2.2" height="10" rx="0.6" transform="rotate(45 5 5)"/>
 <rect x="3.9" y="0" width="2.2" height="10" rx="0.6" transform="rotate(-45 5 5)"/>
 </g>
 <circle cx="5" cy="5" r="1.6" fill="#e4f6c8"/></g><g transform="translate(21 2)"><path d="M0.9 0.9 L3 2.6" stroke="#3d6ba5" stroke-width="1.5" stroke-linecap="round"/>
 <path d="M2.6 2.2 H16.2 L13.6 7.4 H3.4 Z" fill="#4776b0"/>
 <g fill="#e6eef8"><rect x="3.7" y="3.1" width="1.3" height="1.1"/><rect x="5.9" y="3.1" width="1.1" height="1.1"/><rect x="8" y="3.1" width="1.1" height="1.1"/><rect x="10" y="3.1" width="1.1" height="1.1"/><rect x="12.2" y="3.1" width="1.1" height="1.1"/>
 <rect x="4.5" y="5.1" width="1.1" height="1.1"/><rect x="6.2" y="5.1" width="1.1" height="1.1"/><rect x="8.1" y="5.1" width="1.1" height="1.1"/><rect x="10" y="5.1" width="1.1" height="1.1"/><rect x="12" y="5.1" width="1.1" height="1.1"/></g>
 <path d="M4.1 7.2 V10.5 H15.4" fill="none" stroke="#3d6ba5" stroke-width="1.1"/>
 <path d="M5 10.5 H9" stroke="#7ab8f0" stroke-width="0.8"/>
 <rect x="4" y="11" width="2" height="2.2" fill="#2e88e0"/><rect x="12.2" y="11" width="2" height="2.2" fill="#2e88e0"/></g><g transform="translate(40 2)"><circle cx="7.5" cy="7.5" r="7" fill="url(#gc)"/>
 <rect x="6.4" y="3" width="2.2" height="1.8" fill="#2f60a0"/>
 <rect x="6.4" y="5.6" width="2.2" height="5.2" fill="#2f60a0"/></g></svg>
<div class="bt n" style="left:568px;top:362px"><span>6</span></div>
<div class="bt n" style="left:603px;top:362px"><span>T419976</span></div>
<div class="bt n" style="left:686px;top:362px"><span>1</span></div>
<div class="bt n" style="left:722px;top:362px"><span>T419976</span></div>
<div class="bt" style="left:806px;top:362px"><span>TEMPERATURE SENSOR</span></div>
<div class="row rw" style="top:382px"></div>
<svg class="ricons" style="top:382px" width="79" height="19" viewBox="0 0 79 19"><g transform="translate(6 4)"><g fill="#79b32b">
 <circle cx="5" cy="5" r="3.7"/>
 <rect x="3.9" y="0" width="2.2" height="10" rx="0.6"/>
 <rect x="0" y="3.9" width="10" height="2.2" rx="0.6"/>
 <rect x="3.9" y="0" width="2.2" height="10" rx="0.6" transform="rotate(45 5 5)"/>
 <rect x="3.9" y="0" width="2.2" height="10" rx="0.6" transform="rotate(-45 5 5)"/>
 </g>
 <circle cx="5" cy="5" r="1.6" fill="#e4f6c8"/></g><g transform="translate(21 2)"><path d="M0.9 0.9 L3 2.6" stroke="#3d6ba5" stroke-width="1.5" stroke-linecap="round"/>
 <path d="M2.6 2.2 H16.2 L13.6 7.4 H3.4 Z" fill="#4776b0"/>
 <g fill="#e6eef8"><rect x="3.7" y="3.1" width="1.3" height="1.1"/><rect x="5.9" y="3.1" width="1.1" height="1.1"/><rect x="8" y="3.1" width="1.1" height="1.1"/><rect x="10" y="3.1" width="1.1" height="1.1"/><rect x="12.2" y="3.1" width="1.1" height="1.1"/>
 <rect x="4.5" y="5.1" width="1.1" height="1.1"/><rect x="6.2" y="5.1" width="1.1" height="1.1"/><rect x="8.1" y="5.1" width="1.1" height="1.1"/><rect x="10" y="5.1" width="1.1" height="1.1"/><rect x="12" y="5.1" width="1.1" height="1.1"/></g>
 <path d="M4.1 7.2 V10.5 H15.4" fill="none" stroke="#3d6ba5" stroke-width="1.1"/>
 <path d="M5 10.5 H9" stroke="#7ab8f0" stroke-width="0.8"/>
 <rect x="4" y="11" width="2" height="2.2" fill="#2e88e0"/><rect x="12.2" y="11" width="2" height="2.2" fill="#2e88e0"/></g><g transform="translate(40 2)"><circle cx="7.5" cy="7.5" r="7" fill="url(#gc)"/>
 <rect x="6.4" y="3" width="2.2" height="1.8" fill="#2f60a0"/>
 <rect x="6.4" y="5.6" width="2.2" height="5.2" fill="#2f60a0"/></g></svg>
<div class="bt n" style="left:568px;top:382px"><span>7</span></div>
<div class="bt n" style="left:603px;top:382px"><span>T413996</span></div>
<div class="bt n" style="left:686px;top:382px"><span>1</span></div>
<div class="bt n" style="left:722px;top:382px"><span>T413996</span></div>
<div class="bt" style="left:806px;top:382px"><span>SENSOR</span></div>
<svg class="logo" width="40" height="50" viewBox="0 0 40 50"><g transform="translate(0 0)"><g fill="none" stroke="#0d4f9c" stroke-width="2.9">
  <circle cx="11.5" cy="10.2" r="6.6"/><circle cx="28.3" cy="10.2" r="6.6"/>
  <circle cx="11.5" cy="27.3" r="6.6"/><circle cx="28.3" cy="27.3" r="6.6"/>
  <path d="M7 14.7 L16 5.7 M23.8 5.7 L32.8 14.7 M7 22.8 L16 31.8 M23.8 31.8 L32.8 22.8" stroke-width="2.3"/>
 </g>
 <g fill="#0d4f9c">
  <path d="M19.9 2 L21.6 10 L19.9 18.5 L18.2 10 Z"/><path d="M19.9 19 L21.6 27.5 L19.9 36 L18.2 27.5 Z"/>
  <path d="M3.5 18.8 L11.5 17.1 L19.9 18.8 L11.5 20.5 Z"/><path d="M19.9 18.8 L28.3 17.1 L36.3 18.8 L28.3 20.5 Z"/>
 </g>
 <text x="2" y="48" font-family="Liberation Sans" font-weight="bold" font-size="10.5" fill="#0d4f9c" letter-spacing="-0.35">Perkins</text>
 <circle cx="37.6" cy="42.6" r="0.8" fill="#6a8ac0"/></g></svg>
</body></html>
